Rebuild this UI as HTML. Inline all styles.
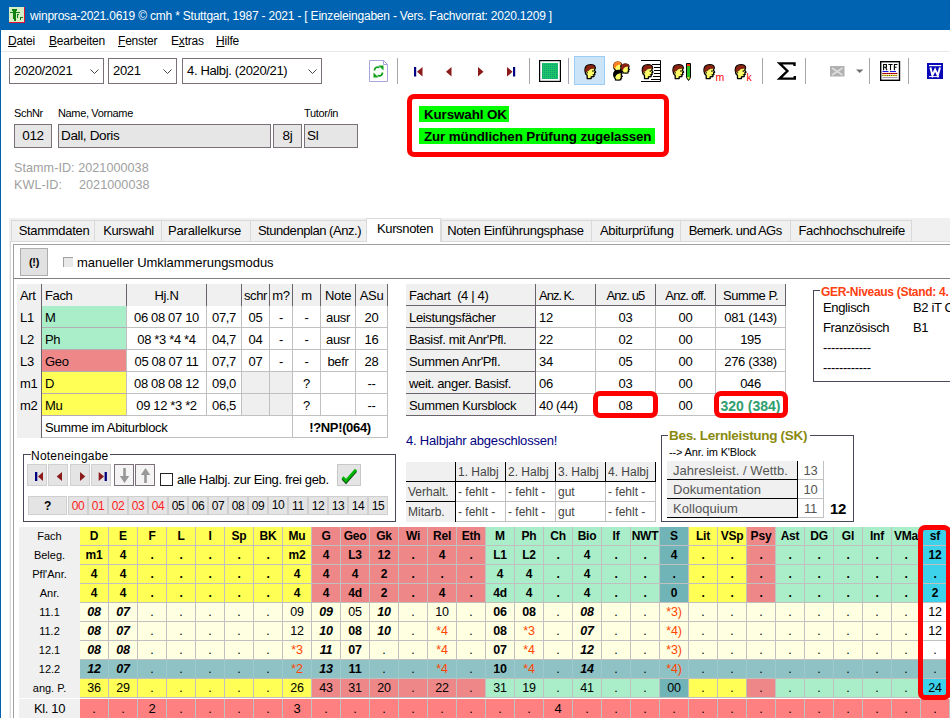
<!DOCTYPE html>
<html><head><meta charset="utf-8"><title>winprosa</title><style>
*{box-sizing:border-box;margin:0;padding:0}
html,body{width:950px;height:718px;overflow:hidden;background:#fff}
body{position:relative;font-family:"Liberation Sans",sans-serif;font-size:13px;letter-spacing:-0.35px;color:#000}
.a{position:absolute;white-space:nowrap}
.t{position:absolute;white-space:nowrap;overflow:hidden}
.c{text-align:center}
.b{font-weight:bold}
.bi{font-weight:bold;font-style:italic}
.o{color:#FF4500}
.fld{position:absolute;background:#E6E6E6;border:1px solid #7A707A;height:24px;line-height:22px;font-size:13.5px;white-space:nowrap}
.cmb{position:absolute;background:#fff;border:1px solid #7A707A;height:26px;line-height:24px;font-size:13px;padding-left:4px;white-space:nowrap}
.cmb svg{position:absolute;right:4px;top:10px}
.sep{position:absolute;width:1px;top:58px;height:27px;background:#A8A8A8}
.tab{position:absolute;top:220px;height:21px;line-height:20px;background:#F0F0F0;border:1px solid #D9D9D9;border-bottom:none;text-align:center;font-size:13px;white-space:nowrap}
.btn{position:absolute;background:#E1E1E1;border:1px solid #ADADAD}
.nb{position:absolute;top:496px;width:20px;height:19px;background:#E4E4E4;border:1px solid #CFCFCF;line-height:19px;text-align:center;font-size:12px}
.rbox{position:absolute;border:5px solid #FF0000;border-radius:7px}
</style></head><body>
<div class="a" style="left:0;top:0;width:950px;height:30px;background:#0063B1"></div>
<div class="a" style="left:0;top:30px;width:1px;height:688px;background:#0063B1"></div>
<svg class="a" style="left:9px;top:7px" width="16" height="16" viewBox="0 0 16 16" shape-rendering="crispEdges"><rect width="16" height="16" fill="#D6EEC6"/><path d="M15.5 0V15.5H0" stroke="#E81030" stroke-width="1" fill="none"/><rect x="3" y="2" width="5" height="2" fill="#108010"/><rect x="1" y="5" width="10" height="1" fill="#108010"/><rect x="5" y="2" width="2" height="12" fill="#108010"/><rect x="4" y="4" width="1" height="8" fill="#108010"/><rect x="8" y="7" width="2" height="1" fill="#108010"/><rect x="8" y="7" width="1" height="4" fill="#108010"/><rect x="11" y="10" width="3" height="1" fill="#108010"/><rect x="11" y="10" width="1" height="3" fill="#108010"/></svg>
<div class="a" style="left:30px;top:0;height:31px;line-height:33px;color:#fff;font-size:12px;letter-spacing:-0.205px">winprosa-2021.0619 © cmh * Stuttgart, 1987 - 2021 - [ Einzeleingaben - Vers. Fachvorrat: 2020.1209 ]</div>
<div class="a" style="left:8px;top:32px;height:19px;line-height:19px;font-size:12px;letter-spacing:-0.2px"><u>D</u>atei</div>
<div class="a" style="left:49px;top:32px;height:19px;line-height:19px;font-size:12px;letter-spacing:-0.2px"><u>B</u>earbeiten</div>
<div class="a" style="left:118px;top:32px;height:19px;line-height:19px;font-size:12px;letter-spacing:-0.2px"><u>F</u>enster</div>
<div class="a" style="left:171px;top:32px;height:19px;line-height:19px;font-size:12px;letter-spacing:-0.2px">E<u>x</u>tras</div>
<div class="a" style="left:216px;top:32px;height:19px;line-height:19px;font-size:12px;letter-spacing:-0.2px"><u>H</u>ilfe</div>
<div class="a" style="left:1px;top:51px;width:949px;height:1px;background:#E8E8E8"></div>
<div class="cmb" style="left:9px;top:58px;width:95px">2020/2021<svg width="9" height="6" viewBox="0 0 9 6"><path d="M0.5 0.5L4.5 4.5L8.5 0.5" stroke="#444" fill="none" stroke-width="1"/></svg></div>
<div class="cmb" style="left:108px;top:58px;width:69px">2021<svg width="9" height="6" viewBox="0 0 9 6"><path d="M0.5 0.5L4.5 4.5L8.5 0.5" stroke="#444" fill="none" stroke-width="1"/></svg></div>
<div class="cmb" style="left:182px;top:58px;width:140px">4. Halbj. (2020/21)<svg width="9" height="6" viewBox="0 0 9 6"><path d="M0.5 0.5L4.5 4.5L8.5 0.5" stroke="#444" fill="none" stroke-width="1"/></svg></div>
<svg class="a" style="left:0;top:52px" width="950" height="40" viewBox="0 52 950 40">
<defs>
<g id="face"><g transform="translate(0.5,0.6) scale(0.94)">
<path d="M1 6.5C1 2.5 3.5 0.6 7 0.6C10 0.6 12 2 12 4.2L11 6.5L12.4 8.6L11.2 9.3L11.6 11L10.6 11.4L10.5 13.2L7.6 13.6L7.6 15.4L3.4 15.4L3.4 12.2C1.6 10.6 1 8.6 1 6.5Z" fill="#FFFF6A" stroke="#000" stroke-width="1.4" stroke-linejoin="round"/>
<path d="M1.3 8.2C1 3 3.6 1 7 1C10 1 11.8 2.2 11.8 4.4L9.6 4.6C7 4.8 5.4 5.6 4.6 7.4L3.4 7.2L3 8.8Z" fill="#8E2212" stroke="#3A0A04" stroke-width="0.5"/>
<rect x="8.9" y="6.6" width="1.2" height="1.7" fill="#000"/>
<path d="M9 11.3H11.2" stroke="#000" stroke-width="0.9"/>
<path d="M3.6 8.4V10" stroke="#000" stroke-width="0.8"/>
</g></g>
<pattern id="gtex" width="2" height="2" patternUnits="userSpaceOnUse"><rect width="2" height="2" fill="#1CC468"/><rect width="1" height="1" fill="#0E9C78"/></pattern>
</defs>
<!-- refresh -->
<path d="M369.5 60.5H383.5L387.5 64.5V81.5H369.5Z" fill="#fff" stroke="#A8A4DC" stroke-width="1"/>
<path d="M383.5 60.5V64.5H387.5" fill="none" stroke="#A8A4DC" stroke-width="1"/>
<path d="M374.5 70.5C374.5 67.5 377 66.5 379.5 67.5" fill="none" stroke="#10A018" stroke-width="1.8"/>
<path d="M378.5 65.5L383.5 65.5L383.5 70.5Z" fill="#10A018"/>
<path d="M382.5 72.5C382.5 75.5 380 76.5 377.5 75.5" fill="none" stroke="#10A018" stroke-width="1.8"/>
<path d="M373.5 72.5L378.5 77.5L373.5 77.5Z" fill="#10A018"/>
<!-- separators -->
<g stroke="#ACA4AC" stroke-width="1">
<path d="M397.5 58V84M529.5 58V84M568.5 58V84M762.5 58V84M805.5 58V84M869.5 58V84M908.5 58V84"/>
</g>
<!-- nav -->
<rect x="414" y="67" width="2.2" height="9.5" fill="#000080"/>
<path d="M422.5 67V76.5L417 71.75Z" fill="#8B1A1A"/>
<path d="M451.5 67V76.5L446 71.75Z" fill="#8B1A1A"/>
<path d="M478 67V76.5L483.5 71.75Z" fill="#8B1A1A"/>
<path d="M507 67V76.5L512.5 71.75Z" fill="#8B1A1A"/>
<rect x="513" y="67" width="2.2" height="9.5" fill="#000080"/>
<!-- green square -->
<rect x="539.6" y="60.6" width="20.8" height="20.8" fill="#fff" stroke="#000" stroke-width="1.2"/>
<rect x="542" y="63" width="16" height="16" fill="url(#gtex)"/>
<!-- selected -->
<rect x="574.5" y="56.5" width="30" height="28" fill="#CCE4F7" stroke="#9CCDF5" stroke-width="1"/>
<use href="#face" x="583.5" y="63.5"/>
<!-- group -->
<g transform="translate(613,61.6) scale(0.7)"><path d="M1 6.5C1 2.5 3.5 0.6 7 0.6C10 0.6 12 2 12 4.2L11 6.5L12.4 8.6L11.2 9.3L11.6 11L10.6 11.4L10.5 13.2L7.6 13.6L3.4 13.4L3.4 12.2C1.6 10.6 1 8.6 1 6.5Z" fill="#FFFF66" stroke="#000" stroke-width="1.8"/><path d="M0.6 7.2C0.6 2 3.6 0 7 0C10.5 0 12.4 2 12.2 4.4L8.4 4.6C5.6 5 4 6.8 3.2 9.8L1.5 9.6Z" fill="#FF8020"/></g>
<g transform="translate(620.6,63.6) scale(0.7)"><path d="M1 6.5C1 2.5 3.5 0.6 7 0.6C10 0.6 12 2 12 4.2L11 6.5L12.4 8.6L11.2 9.3L11.6 11L10.6 11.4L10.5 13.2L7.6 13.6L3.4 13.4L3.4 12.2C1.6 10.6 1 8.6 1 6.5Z" fill="#FFFF66" stroke="#000" stroke-width="1.8"/><path d="M0.6 7.2C0.6 2 3.6 0 7 0C10.5 0 12.4 2 12.2 4.4L8.4 4.6C5.6 5 4 6.8 3.2 9.8L1.5 9.6Z" fill="#8E2212"/></g>
<g transform="translate(613,70) scale(0.74)"><path d="M1 6.5C1 2.5 3.5 0.6 7 0.6C10 0.6 12 2 12 4.2L11 6.5L12.4 8.6L11.2 9.3L11.6 11L10.6 11.4L10.5 13.2L7.6 13.6L3.4 13.4L3.4 12.2C1.6 10.6 1 8.6 1 6.5Z" fill="#FFFF66" stroke="#000" stroke-width="1.8"/><path d="M0.6 7.2C0.6 2 3.6 0 7 0C10.5 0 12.4 2 12.2 4.4L8.4 4.6C5.6 5 4 6.8 3.2 9.8L1.5 9.6Z" fill="#000"/></g>
<!-- face + doc -->
<path d="M641 60.5H660.5V81.5H641" fill="none" stroke="#000" stroke-width="1"/>
<path d="M652 64.5H660M654 67.5H660M654 70.5H660M654 73.5H660M653 76.5H660M651 79.5H660" stroke="#000" stroke-width="1"/>
<use href="#face" x="640.8" y="63.5"/>
<!-- face + pencil -->
<use href="#face" x="671.5" y="63.5"/>
<path d="M686.5 63.5H690.5V77.5L688.5 80.5L686.5 77.5Z" fill="#20C020" stroke="#000" stroke-width="1"/>
<rect x="687" y="64" width="3" height="2" fill="#FF3010"/>
<path d="M687 77.2H690L688.5 79.6Z" fill="#FFE040"/>
<!-- face m -->
<use href="#face" x="702.5" y="63.5"/>
<text x="715.5" y="80.5" font-family="Liberation Sans" font-size="10.5" fill="#FF0000">m</text>
<!-- face k -->
<use href="#face" x="733.8" y="63.5"/>
<text x="746.5" y="80.5" font-family="Liberation Sans" font-size="10.5" fill="#FF0000">k</text>
<!-- sigma -->
<path d="M794.5 66V63.4H779.6L787.4 71L779.6 78.6H794.8V76" fill="none" stroke="#000" stroke-width="2.4" stroke-linejoin="miter"/>
<!-- envelope -->
<rect x="830" y="66" width="14.5" height="10.5" fill="#B0B0B0"/>
<path d="M832 68L842.5 75M842.5 68L832 75" stroke="#DCDCDC" stroke-width="1.6"/>
<path d="M856 69.5H863.4L859.7 73Z" fill="#707070"/>
<!-- RTF -->
<rect x="880.7" y="61.7" width="18.8" height="18.6" fill="#fff" stroke="#000" stroke-width="1.4"/>
<path d="M883.6 70.2V64.5H886.4V67.3H883.6M885.6 67.3L887 70.2M888.4 64.5H892.6M890.5 64.5V70.2M894.4 70.2V64.5H897.4M894.4 67.3H896.6" fill="none" stroke="#000" stroke-width="1.1"/>
<path d="M882.5 71.5H897.5" stroke="#1818E0" stroke-width="1" stroke-dasharray="6 1.5"/>
<path d="M882.5 73.5H897.5" stroke="#E81010" stroke-width="1.2"/>
<path d="M882.5 73.5H897.5" stroke="#400000" stroke-width="1.2" stroke-dasharray="0.8 1.4"/>
<path d="M882.5 75.5H897.5" stroke="#F0E010" stroke-width="1.2"/>
<path d="M882.5 75.5H897.5" stroke="#303000" stroke-width="1.2" stroke-dasharray="0.8 1.4"/>
<path d="M882.5 77.6H897.5" stroke="#9080A0" stroke-width="0.9"/>
<!-- word -->
<rect x="927" y="63" width="16" height="16" fill="#0808B8"/>
<path d="M929 65.6H941.2" stroke="#fff" stroke-width="1.2"/>
<path d="M930.4 67.6L932.4 75.4L935.1 69.6L937.8 75.4L940 67.6" fill="none" stroke="#fff" stroke-width="2"/>
<path d="M929 76.6H939" stroke="#fff" stroke-width="1"/>
</svg>

<div class="a" style="left:14px;top:106px;font-size:11px;line-height:14px">SchNr</div>
<div class="a" style="left:58px;top:106px;font-size:11px;line-height:14px">Name, Vorname</div>
<div class="a" style="left:304px;top:106px;font-size:11px;line-height:14px">Tutor/in</div>
<div class="fld c" style="left:14px;top:124px;width:38px">012</div>
<div class="fld" style="left:58px;top:124px;width:213px;padding-left:2px">Dall, Doris</div>
<div class="fld c" style="left:273px;top:124px;width:29px">8j</div>
<div class="fld" style="left:304px;top:124px;width:54px;padding-left:2px">Sl</div>
<div class="a" style="left:14px;top:161px;line-height:15px;color:#A0A0A0;font-size:12.6px;letter-spacing:0.05px">Stamm-ID: 2021000038</div>
<div class="a" style="left:14px;top:178px;line-height:15px;color:#A0A0A0;font-size:12.6px;letter-spacing:0.05px">KWL-ID:</div>
<div class="a" style="left:79px;top:178px;line-height:15px;color:#A0A0A0;font-size:12.6px;letter-spacing:0.05px">2021000038</div>
<div class="rbox" style="left:407px;top:94px;width:262px;height:63px;border-radius:7px"></div>
<div class="a b" style="left:419px;top:106px;width:90px;height:16px;line-height:17px;background:#00FF00;font-size:13.4px;letter-spacing:-0.12px;padding-left:5px">Kurswahl OK</div>
<div class="a b" style="left:419px;top:128px;width:236px;height:16px;line-height:17px;background:#00FF00;font-size:13.4px;letter-spacing:-0.12px;padding-left:5px">Zur mündlichen Prüfung zugelassen</div>
<div class="a" style="left:9px;top:218px;width:941px;height:500px;background:#F0F0F0"></div>
<div class="a" style="left:10px;top:241px;width:940px;height:477px;background:#fff;border-left:1px solid #DADADA;border-top:1px solid #DADADA"></div>
<div class="tab" style="left:11px;width:84px"><span style="position:relative;left:1px;letter-spacing:-0.3px">Stammdaten</span></div>
<div class="tab" style="left:94px;width:68px"><span style="position:relative;left:0.5px;letter-spacing:-0.35px">Kurswahl</span></div>
<div class="tab" style="left:161px;width:90px"><span style="position:relative;left:-1.5px;letter-spacing:-0.15px">Parallelkurse</span></div>
<div class="tab" style="left:250px;width:117px"><span style="position:relative;left:1px;letter-spacing:-0.45px">Stundenplan (Anz.)</span></div>
<div class="tab" style="left:441px;width:151px"><span style="position:relative;left:-1px;letter-spacing:-0.3px">Noten Einführungsphase</span></div>
<div class="tab" style="left:591px;width:90px"><span style="position:relative;left:0.8px;letter-spacing:-0.35px">Abiturprüfung</span></div>
<div class="tab" style="left:680px;width:111px"><span style="position:relative;left:-0.4px;letter-spacing:-0.6px">Bemerk. und AGs</span></div>
<div class="tab" style="left:790px;width:122px"><span style="position:relative;left:0.7px;letter-spacing:-0.35px">Fachhochschulreife</span></div>
<div class="tab" style="left:366px;width:75px;top:218px;height:24px;line-height:19px;background:#fff;border-color:#DADADA"><span style="position:relative;left:1.5px">Kursnoten</span></div>
<div class="a" style="left:13px;top:244px;width:937px;height:35px;border-left:1px solid #A0A0A0;border-top:1px solid #A0A0A0"></div>
<div class="a" style="left:13px;top:278px;width:937px;height:440px;border-left:1px solid #A0A0A0;border-top:1px solid #808080"></div>
<div class="btn b c" style="left:20px;top:248px;width:28px;height:28px;line-height:26px;font-size:11px">(!)</div>
<div class="a" style="left:63px;top:257px;width:10px;height:10px;background:#E8E8E8;border-left:1px solid #A0A0A0;border-top:1px solid #A0A0A0"></div>
<div class="a" style="left:77px;top:255px;line-height:16px;font-size:13px;letter-spacing:-0.05px">manueller Umklammerungsmodus</div>
<div class="t " style="left:17px;top:284px;width:25px;height:22px;line-height:24px;background:#F0F0F0;border-right:1px solid #6B636B;padding-left:3px;">Art</div>
<div class="t " style="left:42px;top:284px;width:85px;height:22px;line-height:24px;background:#F0F0F0;border-right:1px solid #6B636B;padding-left:3px;">Fach</div>
<div class="t c" style="left:127px;top:284px;width:80px;height:22px;line-height:24px;background:#F0F0F0;border-right:1px solid #6B636B;">Hj.N</div>
<div class="t c" style="left:207px;top:284px;width:35px;height:22px;line-height:24px;background:#F0F0F0;border-right:1px solid #6B636B;"></div>
<div class="t c" style="left:242px;top:284px;width:28px;height:22px;line-height:24px;background:#F0F0F0;border-right:1px solid #6B636B;">schr</div>
<div class="t c" style="left:270px;top:284px;width:23px;height:22px;line-height:24px;background:#F0F0F0;border-right:1px solid #6B636B;">m?</div>
<div class="t c" style="left:293px;top:284px;width:28px;height:22px;line-height:24px;background:#F0F0F0;border-right:1px solid #6B636B;">m</div>
<div class="t c" style="left:321px;top:284px;width:35px;height:22px;line-height:24px;background:#F0F0F0;border-right:1px solid #6B636B;">Note</div>
<div class="t c" style="left:356px;top:284px;width:32px;height:22px;line-height:24px;background:#F0F0F0;border-right:1px solid #6B636B;">ASu</div>
<div class="t " style="left:17px;top:306px;width:25px;height:22px;line-height:24px;background:#F0F0F0;border-right:1px solid #6B636B;padding-left:3px;">L1</div>
<div class="t " style="left:42px;top:306px;width:85px;height:22px;line-height:24px;background:#A9EEC9;border-right:1px solid #C0C0C0;border-bottom:1px solid #B4ACB4;padding-left:3px;">M</div>
<div class="t c" style="left:127px;top:306px;width:80px;height:22px;line-height:24px;border-right:1px solid #C0C0C0;border-bottom:1px solid #C0C0C0;">06 08 07 10</div>
<div class="t c" style="left:207px;top:306px;width:35px;height:22px;line-height:24px;border-right:1px solid #C0C0C0;border-bottom:1px solid #C0C0C0;">07,7</div>
<div class="t c" style="left:242px;top:306px;width:28px;height:22px;line-height:24px;border-right:1px solid #C0C0C0;border-bottom:1px solid #C0C0C0;">05</div>
<div class="t c" style="left:270px;top:306px;width:23px;height:22px;line-height:24px;border-right:1px solid #C0C0C0;border-bottom:1px solid #C0C0C0;">-</div>
<div class="t c" style="left:293px;top:306px;width:28px;height:22px;line-height:24px;border-right:1px solid #C0C0C0;border-bottom:1px solid #C0C0C0;">-</div>
<div class="t c" style="left:321px;top:306px;width:35px;height:22px;line-height:24px;border-right:1px solid #C0C0C0;border-bottom:1px solid #C0C0C0;">ausr</div>
<div class="t c" style="left:356px;top:306px;width:32px;height:22px;line-height:24px;border-right:1px solid #C0C0C0;border-bottom:1px solid #C0C0C0;">20</div>
<div class="t " style="left:17px;top:328px;width:25px;height:22px;line-height:24px;background:#F0F0F0;border-right:1px solid #6B636B;padding-left:3px;">L2</div>
<div class="t " style="left:42px;top:328px;width:85px;height:22px;line-height:24px;background:#A9EEC9;border-right:1px solid #C0C0C0;border-bottom:1px solid #B4ACB4;padding-left:3px;">Ph</div>
<div class="t c" style="left:127px;top:328px;width:80px;height:22px;line-height:24px;border-right:1px solid #C0C0C0;border-bottom:1px solid #C0C0C0;">08 *3 *4 *4</div>
<div class="t c" style="left:207px;top:328px;width:35px;height:22px;line-height:24px;border-right:1px solid #C0C0C0;border-bottom:1px solid #C0C0C0;">04,7</div>
<div class="t c" style="left:242px;top:328px;width:28px;height:22px;line-height:24px;border-right:1px solid #C0C0C0;border-bottom:1px solid #C0C0C0;">04</div>
<div class="t c" style="left:270px;top:328px;width:23px;height:22px;line-height:24px;border-right:1px solid #C0C0C0;border-bottom:1px solid #C0C0C0;">-</div>
<div class="t c" style="left:293px;top:328px;width:28px;height:22px;line-height:24px;border-right:1px solid #C0C0C0;border-bottom:1px solid #C0C0C0;">-</div>
<div class="t c" style="left:321px;top:328px;width:35px;height:22px;line-height:24px;border-right:1px solid #C0C0C0;border-bottom:1px solid #C0C0C0;">ausr</div>
<div class="t c" style="left:356px;top:328px;width:32px;height:22px;line-height:24px;border-right:1px solid #C0C0C0;border-bottom:1px solid #C0C0C0;">16</div>
<div class="t " style="left:17px;top:350px;width:25px;height:22px;line-height:24px;background:#F0F0F0;border-right:1px solid #6B636B;padding-left:3px;">L3</div>
<div class="t " style="left:42px;top:350px;width:85px;height:22px;line-height:24px;background:#EE8888;border-right:1px solid #C0C0C0;border-bottom:1px solid #B4ACB4;padding-left:3px;">Geo</div>
<div class="t c" style="left:127px;top:350px;width:80px;height:22px;line-height:24px;border-right:1px solid #C0C0C0;border-bottom:1px solid #C0C0C0;">05 08 07 11</div>
<div class="t c" style="left:207px;top:350px;width:35px;height:22px;line-height:24px;border-right:1px solid #C0C0C0;border-bottom:1px solid #C0C0C0;">07,7</div>
<div class="t c" style="left:242px;top:350px;width:28px;height:22px;line-height:24px;border-right:1px solid #C0C0C0;border-bottom:1px solid #C0C0C0;">07</div>
<div class="t c" style="left:270px;top:350px;width:23px;height:22px;line-height:24px;border-right:1px solid #C0C0C0;border-bottom:1px solid #C0C0C0;">-</div>
<div class="t c" style="left:293px;top:350px;width:28px;height:22px;line-height:24px;border-right:1px solid #C0C0C0;border-bottom:1px solid #C0C0C0;">-</div>
<div class="t c" style="left:321px;top:350px;width:35px;height:22px;line-height:24px;border-right:1px solid #C0C0C0;border-bottom:1px solid #C0C0C0;">befr</div>
<div class="t c" style="left:356px;top:350px;width:32px;height:22px;line-height:24px;border-right:1px solid #C0C0C0;border-bottom:1px solid #C0C0C0;">28</div>
<div class="t " style="left:17px;top:372px;width:25px;height:22px;line-height:24px;background:#F0F0F0;border-right:1px solid #6B636B;padding-left:3px;">m1</div>
<div class="t " style="left:42px;top:372px;width:85px;height:22px;line-height:24px;background:#FFFF55;border-right:1px solid #C0C0C0;border-bottom:1px solid #B4ACB4;padding-left:3px;">D</div>
<div class="t c" style="left:127px;top:372px;width:80px;height:22px;line-height:24px;border-right:1px solid #C0C0C0;border-bottom:1px solid #C0C0C0;">08 08 08 12</div>
<div class="t c" style="left:207px;top:372px;width:35px;height:22px;line-height:24px;border-right:1px solid #C0C0C0;border-bottom:1px solid #C0C0C0;">09,0</div>
<div class="t c" style="left:242px;top:372px;width:28px;height:22px;line-height:24px;background:#EFEFEF;border-right:1px solid #C0C0C0;border-bottom:1px solid #C0C0C0;"></div>
<div class="t c" style="left:270px;top:372px;width:23px;height:22px;line-height:24px;background:#EFEFEF;border-right:1px solid #C0C0C0;border-bottom:1px solid #C0C0C0;"></div>
<div class="t c" style="left:293px;top:372px;width:28px;height:22px;line-height:24px;border-right:1px solid #C0C0C0;border-bottom:1px solid #C0C0C0;">?</div>
<div class="t c" style="left:321px;top:372px;width:35px;height:22px;line-height:24px;border-right:1px solid #C0C0C0;border-bottom:1px solid #C0C0C0;"></div>
<div class="t c" style="left:356px;top:372px;width:32px;height:22px;line-height:24px;border-right:1px solid #C0C0C0;border-bottom:1px solid #C0C0C0;">--</div>
<div class="t " style="left:17px;top:394px;width:25px;height:22px;line-height:24px;background:#F0F0F0;border-right:1px solid #6B636B;padding-left:3px;">m2</div>
<div class="t " style="left:42px;top:394px;width:85px;height:22px;line-height:24px;background:#FFFF55;border-right:1px solid #C0C0C0;border-bottom:1px solid #B4ACB4;padding-left:3px;">Mu</div>
<div class="t c" style="left:127px;top:394px;width:80px;height:22px;line-height:24px;border-right:1px solid #C0C0C0;border-bottom:1px solid #C0C0C0;">09 12 *3 *2</div>
<div class="t c" style="left:207px;top:394px;width:35px;height:22px;line-height:24px;border-right:1px solid #C0C0C0;border-bottom:1px solid #C0C0C0;">06,5</div>
<div class="t c" style="left:242px;top:394px;width:28px;height:22px;line-height:24px;background:#EFEFEF;border-right:1px solid #C0C0C0;border-bottom:1px solid #C0C0C0;"></div>
<div class="t c" style="left:270px;top:394px;width:23px;height:22px;line-height:24px;background:#EFEFEF;border-right:1px solid #C0C0C0;border-bottom:1px solid #C0C0C0;"></div>
<div class="t c" style="left:293px;top:394px;width:28px;height:22px;line-height:24px;border-right:1px solid #C0C0C0;border-bottom:1px solid #C0C0C0;">?</div>
<div class="t c" style="left:321px;top:394px;width:35px;height:22px;line-height:24px;border-right:1px solid #C0C0C0;border-bottom:1px solid #C0C0C0;"></div>
<div class="t c" style="left:356px;top:394px;width:32px;height:22px;line-height:24px;border-right:1px solid #C0C0C0;border-bottom:1px solid #C0C0C0;">--</div>
<div class="t " style="left:17px;top:416px;width:25px;height:22px;line-height:22px;background:#F0F0F0;border-right:1px solid #6B636B;"></div>
<div class="t " style="left:42px;top:416px;width:251px;height:22px;line-height:24px;border-right:1px solid #C0C0C0;border-bottom:1px solid #C0C0C0;padding-left:3px;">Summe im Abiturblock</div>
<div class="t c b" style="left:293px;top:416px;width:95px;height:22px;line-height:24px;border-right:1px solid #C0C0C0;border-bottom:1px solid #C0C0C0;">!?NP!(064)</div>
<div class="t " style="left:406px;top:284px;width:130px;height:22px;line-height:24px;background:#F0F0F0;border-right:1px solid #6B636B;border-bottom:1px solid #6B636B;padding-left:3px;">Fachart&nbsp; (4 | 4)</div>
<div class="t " style="left:536px;top:284px;width:60px;height:22px;line-height:24px;background:#F0F0F0;border-right:1px solid #6B636B;border-bottom:1px solid #6B636B;padding-left:3px;"><span style="letter-spacing:-1px">Anz. K.</span></div>
<div class="t c" style="left:596px;top:284px;width:60px;height:22px;line-height:24px;background:#F0F0F0;border-right:1px solid #6B636B;border-bottom:1px solid #6B636B;"><span style="letter-spacing:-0.9px">Anz. u5</span></div>
<div class="t c" style="left:656px;top:284px;width:60px;height:22px;line-height:24px;background:#F0F0F0;border-right:1px solid #6B636B;border-bottom:1px solid #6B636B;"><span style="letter-spacing:-0.8px">Anz. off.</span></div>
<div class="t c" style="left:716px;top:284px;width:70px;height:22px;line-height:24px;background:#F0F0F0;border-right:1px solid #6B636B;border-bottom:1px solid #6B636B;"><span style="letter-spacing:-0.5px">Summe P.</span></div>
<div class="t " style="left:406px;top:306px;width:130px;height:22px;line-height:24px;background:#F0F0F0;border-right:1px solid #6B636B;border-bottom:1px solid #6B636B;padding-left:3px;">Leistungsfächer</div>
<div class="t " style="left:536px;top:306px;width:60px;height:22px;line-height:24px;border-right:1px solid #C0C0C0;border-bottom:1px solid #C0C0C0;padding-left:3px;">12</div>
<div class="t c" style="left:596px;top:306px;width:60px;height:22px;line-height:24px;border-right:1px solid #C0C0C0;border-bottom:1px solid #C0C0C0;">03</div>
<div class="t c" style="left:656px;top:306px;width:60px;height:22px;line-height:24px;border-right:1px solid #C0C0C0;border-bottom:1px solid #C0C0C0;">00</div>
<div class="t c" style="left:716px;top:306px;width:70px;height:22px;line-height:24px;border-right:1px solid #C0C0C0;border-bottom:1px solid #C0C0C0;">081 (143)</div>
<div class="t " style="left:406px;top:328px;width:130px;height:22px;line-height:24px;background:#F0F0F0;border-right:1px solid #6B636B;border-bottom:1px solid #6B636B;padding-left:3px;">Basisf. mit Anr'Pfl.</div>
<div class="t " style="left:536px;top:328px;width:60px;height:22px;line-height:24px;border-right:1px solid #C0C0C0;border-bottom:1px solid #C0C0C0;padding-left:3px;">22</div>
<div class="t c" style="left:596px;top:328px;width:60px;height:22px;line-height:24px;border-right:1px solid #C0C0C0;border-bottom:1px solid #C0C0C0;">02</div>
<div class="t c" style="left:656px;top:328px;width:60px;height:22px;line-height:24px;border-right:1px solid #C0C0C0;border-bottom:1px solid #C0C0C0;">00</div>
<div class="t c" style="left:716px;top:328px;width:70px;height:22px;line-height:24px;border-right:1px solid #C0C0C0;border-bottom:1px solid #C0C0C0;">195</div>
<div class="t " style="left:406px;top:350px;width:130px;height:22px;line-height:24px;background:#F0F0F0;border-right:1px solid #6B636B;border-bottom:1px solid #6B636B;padding-left:3px;">Summen Anr'Pfl.</div>
<div class="t " style="left:536px;top:350px;width:60px;height:22px;line-height:24px;border-right:1px solid #C0C0C0;border-bottom:1px solid #C0C0C0;padding-left:3px;">34</div>
<div class="t c" style="left:596px;top:350px;width:60px;height:22px;line-height:24px;border-right:1px solid #C0C0C0;border-bottom:1px solid #C0C0C0;">05</div>
<div class="t c" style="left:656px;top:350px;width:60px;height:22px;line-height:24px;border-right:1px solid #C0C0C0;border-bottom:1px solid #C0C0C0;">00</div>
<div class="t c" style="left:716px;top:350px;width:70px;height:22px;line-height:24px;border-right:1px solid #C0C0C0;border-bottom:1px solid #C0C0C0;">276 (338)</div>
<div class="t " style="left:406px;top:372px;width:130px;height:22px;line-height:24px;background:#F0F0F0;border-right:1px solid #6B636B;border-bottom:1px solid #6B636B;padding-left:3px;">weit. anger. Basisf.</div>
<div class="t " style="left:536px;top:372px;width:60px;height:22px;line-height:24px;border-right:1px solid #C0C0C0;border-bottom:1px solid #C0C0C0;padding-left:3px;">06</div>
<div class="t c" style="left:596px;top:372px;width:60px;height:22px;line-height:24px;border-right:1px solid #C0C0C0;border-bottom:1px solid #C0C0C0;">03</div>
<div class="t c" style="left:656px;top:372px;width:60px;height:22px;line-height:24px;border-right:1px solid #C0C0C0;border-bottom:1px solid #C0C0C0;">00</div>
<div class="t c" style="left:716px;top:372px;width:70px;height:22px;line-height:24px;border-right:1px solid #C0C0C0;border-bottom:1px solid #C0C0C0;">046</div>
<div class="t " style="left:406px;top:394px;width:130px;height:22px;line-height:24px;background:#F0F0F0;border-right:1px solid #6B636B;border-bottom:1px solid #6B636B;padding-left:3px;">Summen Kursblock</div>
<div class="t " style="left:536px;top:394px;width:60px;height:22px;line-height:24px;border-right:1px solid #C0C0C0;border-bottom:1px solid #C0C0C0;padding-left:3px;">40 (44)</div>
<div class="t c" style="left:596px;top:394px;width:60px;height:22px;line-height:24px;border-right:1px solid #C0C0C0;border-bottom:1px solid #C0C0C0;">08</div>
<div class="t c" style="left:656px;top:394px;width:60px;height:22px;line-height:24px;border-right:1px solid #C0C0C0;border-bottom:1px solid #C0C0C0;">00</div>
<div class="t c" style="left:716px;top:394px;width:70px;height:22px;line-height:24px;border-right:1px solid #C0C0C0;border-bottom:1px solid #C0C0C0;"><span style="color:#2E9E6E;font-weight:bold;font-size:14px;letter-spacing:0">320 (384)</span></div>
<div class="rbox" style="left:593px;top:391px;width:65px;height:27px"></div>
<div class="rbox" style="left:714px;top:391px;width:74px;height:27px"></div>
<div class="a" style="left:813px;top:290px;width:140px;height:92px;border:1px solid #484858"></div>
<div class="a b" style="left:820px;top:285px;height:15px;line-height:15px;background:#fff;color:#FF4010;font-size:12px;letter-spacing:-0.3px;padding:0 1px">GER-Niveaus (Stand: 4. Halbj.)</div>
<div class="a" style="left:823px;top:300px;line-height:15px">Englisch</div>
<div class="a" style="left:913px;top:300px;line-height:15px">B2 iT C1</div>
<div class="a" style="left:823px;top:320px;line-height:15px">Französisch</div>
<div class="a" style="left:913px;top:320px;line-height:15px">B1</div>
<div class="a" style="left:823px;top:340px;line-height:15px">------------</div>
<div class="a" style="left:823px;top:360px;line-height:15px">------------</div>
<div class="a" style="left:406px;top:433px;line-height:15px;color:#000080;font-size:13px;letter-spacing:-0.22px">4. Halbjahr abgeschlossen!</div>
<div class="t " style="left:406px;top:462px;width:50px;height:20px;line-height:20px;background:#F0F0F0;border-right:1px solid #000;border-bottom:1px solid #000;"></div>
<div class="t " style="left:456px;top:462px;width:50px;height:20px;line-height:20px;background:#F0F0F0;border-right:1px solid #000;border-bottom:1px solid #000;padding-left:2px;color:#444;font-size:12px;letter-spacing:0;">1. Halbj</div>
<div class="t " style="left:506px;top:462px;width:50px;height:20px;line-height:20px;background:#F0F0F0;border-right:1px solid #000;border-bottom:1px solid #000;padding-left:2px;color:#444;font-size:12px;letter-spacing:0;">2. Halbj</div>
<div class="t " style="left:556px;top:462px;width:50px;height:20px;line-height:20px;background:#F0F0F0;border-right:1px solid #000;border-bottom:1px solid #000;padding-left:2px;color:#444;font-size:12px;letter-spacing:0;">3. Halbj</div>
<div class="t " style="left:606px;top:462px;width:50px;height:20px;line-height:20px;background:#F0F0F0;border-right:1px solid #000;border-bottom:1px solid #000;padding-left:2px;color:#444;font-size:12px;letter-spacing:0;">4. Halbj</div>
<div class="t " style="left:406px;top:482px;width:50px;height:20px;line-height:20px;background:#F0F0F0;border-right:1px solid #000;border-bottom:1px solid #000;padding-left:2px;color:#444;font-size:12px;letter-spacing:0;">Verhalt.</div>
<div class="t " style="left:456px;top:482px;width:50px;height:20px;line-height:20px;border-right:1px solid #C0C0C0;border-bottom:1px solid #C0C0C0;padding-left:2px;color:#444;font-size:12px;letter-spacing:0;">- fehlt -</div>
<div class="t " style="left:506px;top:482px;width:50px;height:20px;line-height:20px;border-right:1px solid #C0C0C0;border-bottom:1px solid #C0C0C0;padding-left:2px;color:#444;font-size:12px;letter-spacing:0;">- fehlt -</div>
<div class="t " style="left:556px;top:482px;width:50px;height:20px;line-height:20px;border-right:1px solid #C0C0C0;border-bottom:1px solid #C0C0C0;padding-left:2px;color:#444;font-size:12px;letter-spacing:0;">gut</div>
<div class="t " style="left:606px;top:482px;width:50px;height:20px;line-height:20px;border-right:1px solid #C0C0C0;border-bottom:1px solid #C0C0C0;padding-left:2px;color:#444;font-size:12px;letter-spacing:0;">- fehlt -</div>
<div class="t " style="left:406px;top:502px;width:50px;height:20px;line-height:20px;background:#F0F0F0;border-right:1px solid #000;padding-left:2px;color:#444;font-size:12px;letter-spacing:0;">Mitarb.</div>
<div class="t " style="left:456px;top:502px;width:50px;height:20px;line-height:20px;border-right:1px solid #C0C0C0;border-bottom:1px solid #C0C0C0;padding-left:2px;color:#444;font-size:12px;letter-spacing:0;">- fehlt -</div>
<div class="t " style="left:506px;top:502px;width:50px;height:20px;line-height:20px;border-right:1px solid #C0C0C0;border-bottom:1px solid #C0C0C0;padding-left:2px;color:#444;font-size:12px;letter-spacing:0;">- fehlt -</div>
<div class="t " style="left:556px;top:502px;width:50px;height:20px;line-height:20px;border-right:1px solid #C0C0C0;border-bottom:1px solid #C0C0C0;padding-left:2px;color:#444;font-size:12px;letter-spacing:0;">gut</div>
<div class="t " style="left:606px;top:502px;width:50px;height:20px;line-height:20px;border-right:1px solid #C0C0C0;border-bottom:1px solid #C0C0C0;padding-left:2px;color:#444;font-size:12px;letter-spacing:0;">- fehlt -</div>
<div class="a" style="left:661px;top:435px;width:193px;height:87px;border:1px solid #484858"></div>
<div class="a b" style="left:668px;top:428px;height:16px;line-height:16px;background:#fff;color:#8A8A10;font-size:13.5px;letter-spacing:-0.3px;padding:0 3px 0 1px">Bes. Lernleistung (SK)</div>
<div class="a" style="left:669px;top:446px;line-height:13px;font-size:11px;letter-spacing:-0.15px">--&gt; Anr. im K'Block</div>
<div class="t " style="left:667px;top:461px;width:131px;height:19px;line-height:19px;background:#F0F0F0;border-right:1px solid #000;border-bottom:1px solid #000;padding-left:6px;color:#555;letter-spacing:0.05px;">Jahresleist. / Wettb.</div>
<div class="t c" style="left:798px;top:461px;width:26px;height:19px;line-height:19px;border-right:1px solid #C0C0C0;border-bottom:1px solid #C0C0C0;color:#555;">13</div>
<div class="t " style="left:667px;top:480px;width:131px;height:19px;line-height:19px;background:#F0F0F0;border-right:1px solid #000;border-bottom:1px solid #000;padding-left:6px;color:#555;letter-spacing:0.05px;">Dokumentation</div>
<div class="t c" style="left:798px;top:480px;width:26px;height:19px;line-height:19px;border-right:1px solid #C0C0C0;border-bottom:1px solid #C0C0C0;color:#555;">10</div>
<div class="t " style="left:667px;top:499px;width:131px;height:19px;line-height:19px;background:#F0F0F0;border-right:1px solid #000;border-bottom:1px solid #000;padding-left:6px;color:#555;letter-spacing:0.05px;">Kolloquium</div>
<div class="t c" style="left:798px;top:499px;width:26px;height:19px;line-height:19px;border-right:1px solid #C0C0C0;border-bottom:1px solid #C0C0C0;color:#555;">11</div>
<div class="a b" style="left:830px;top:500px;line-height:17px;font-size:15px">12</div>
<div class="a" style="left:23px;top:454px;width:373px;height:68px;border:1px solid #484858"></div>
<div class="a" style="left:31px;top:448px;height:16px;line-height:16px;background:#fff;font-size:12px;letter-spacing:0.23px;padding:0 1px 0 0">Noteneingabe</div>
<div class="btn" style="left:27px;top:464px;width:20px;height:22px;background:#E4E4E4;border-color:#D0D0D0"></div>
<div class="btn" style="left:48px;top:464px;width:20px;height:22px;background:#E4E4E4;border-color:#D0D0D0"></div>
<div class="btn" style="left:70px;top:464px;width:20px;height:22px;background:#E4E4E4;border-color:#D0D0D0"></div>
<div class="btn" style="left:91px;top:464px;width:20px;height:22px;background:#E4E4E4;border-color:#D0D0D0"></div>
<div class="btn" style="left:114px;top:464px;width:20px;height:22px;background:#F4F4F4;border-color:#7A707A"></div>
<div class="btn" style="left:135px;top:464px;width:20px;height:22px;background:#F4F4F4;border-color:#7A707A"></div>
<svg class="a" style="left:24px;top:462px" width="140" height="28" viewBox="24 462 140 28">
<rect x="35" y="472" width="2.3" height="9" fill="#000080"/>
<path d="M43 472V481L38 476.5Z" fill="#8B1A1A"/>
<path d="M62 472V481L56.7 476.5Z" fill="#8B1A1A"/>
<path d="M80 472V481L85.3 476.5Z" fill="#8B1A1A"/>
<path d="M98.7 472V481L104 476.5Z" fill="#8B1A1A"/>
<rect x="104.6" y="472" width="2.3" height="9" fill="#000080"/>
<path d="M123.2 468H125.8V476H129.2L124.5 483L119.8 476H123.2Z" fill="#989898"/>
<path d="M144.2 483H146.8V475H150.2L145.5 468L140.8 475H144.2Z" fill="#989898"/>
</svg>

<div class="a" style="left:160px;top:473px;width:13px;height:13px;border:1px solid #222;background:#fff"></div>
<div class="a" style="left:177px;top:472px;line-height:16px;font-size:13px">alle Halbj. zur Eing. frei geb.</div>
<div class="btn" style="left:337px;top:464px;width:24px;height:22px;background:#E4E4E4;border-color:#C8C8C8"></div>
<svg class="a" style="left:337px;top:464px" width="24" height="22" viewBox="337 464 24 22"><path d="M342.6 478.6L346 482.4L356 471" stroke="#083808" stroke-width="2.6" fill="none"/><path d="M342.6 477.2L346 481L356 469.6" stroke="#00B400" stroke-width="2.8" fill="none"/></svg>
<div class="nb b" style="left:28px;width:39px">?</div>
<div class="nb" style="left:68px;color:#FF2020">00</div>
<div class="nb" style="left:88px;color:#FF2020">01</div>
<div class="nb" style="left:108px;color:#FF2020">02</div>
<div class="nb" style="left:128px;color:#FF2020">03</div>
<div class="nb" style="left:148px;color:#FF2020">04</div>
<div class="nb" style="left:168px;color:#000">05</div>
<div class="nb" style="left:188px;color:#000">06</div>
<div class="nb" style="left:208px;color:#000">07</div>
<div class="nb" style="left:228px;color:#000">08</div>
<div class="nb" style="left:248px;color:#000">09</div>
<div class="nb" style="left:268px;color:#000;line-height:17px">10</div>
<div class="nb" style="left:288px;color:#000">11</div>
<div class="nb" style="left:308px;color:#000">12</div>
<div class="nb" style="left:328px;color:#000">13</div>
<div class="nb" style="left:348px;color:#000">14</div>
<div class="nb" style="left:368px;color:#000">15</div>
<div class="t c" style="left:19px;top:527px;width:61px;height:19px;line-height:19px;background:#F0F0F0;font-size:11px;letter-spacing:0;">Fach</div>
<div class="t c b" style="left:80px;top:527px;width:29px;height:19px;line-height:19px;background:#FFFF55;border-right:1px solid #C0C0C0;border-bottom:1px solid #C0C0C0;font-size:12px;letter-spacing:-0.2px;">D</div>
<div class="t c b" style="left:109px;top:527px;width:29px;height:19px;line-height:19px;background:#FFFF55;border-right:1px solid #C0C0C0;border-bottom:1px solid #C0C0C0;font-size:12px;letter-spacing:-0.2px;">E</div>
<div class="t c b" style="left:138px;top:527px;width:29px;height:19px;line-height:19px;background:#FFFF55;border-right:1px solid #C0C0C0;border-bottom:1px solid #C0C0C0;font-size:12px;letter-spacing:-0.2px;">F</div>
<div class="t c b" style="left:167px;top:527px;width:29px;height:19px;line-height:19px;background:#FFFF55;border-right:1px solid #C0C0C0;border-bottom:1px solid #C0C0C0;font-size:12px;letter-spacing:-0.2px;">L</div>
<div class="t c b" style="left:196px;top:527px;width:29px;height:19px;line-height:19px;background:#FFFF55;border-right:1px solid #C0C0C0;border-bottom:1px solid #C0C0C0;font-size:12px;letter-spacing:-0.2px;">I</div>
<div class="t c b" style="left:225px;top:527px;width:29px;height:19px;line-height:19px;background:#FFFF55;border-right:1px solid #C0C0C0;border-bottom:1px solid #C0C0C0;font-size:12px;letter-spacing:-0.2px;">Sp</div>
<div class="t c b" style="left:254px;top:527px;width:29px;height:19px;line-height:19px;background:#FFFF55;border-right:1px solid #C0C0C0;border-bottom:1px solid #C0C0C0;font-size:12px;letter-spacing:-0.2px;">BK</div>
<div class="t c b" style="left:283px;top:527px;width:29px;height:19px;line-height:19px;background:#FFFF55;border-right:1px solid #C0C0C0;border-bottom:1px solid #C0C0C0;font-size:12px;letter-spacing:-0.2px;">Mu</div>
<div class="t c b" style="left:312px;top:527px;width:29px;height:19px;line-height:19px;background:#EE8888;border-right:1px solid #C0C0C0;border-bottom:1px solid #C0C0C0;font-size:12px;letter-spacing:-0.2px;">G</div>
<div class="t c b" style="left:341px;top:527px;width:29px;height:19px;line-height:19px;background:#EE8888;border-right:1px solid #C0C0C0;border-bottom:1px solid #C0C0C0;font-size:12px;letter-spacing:-0.2px;">Geo</div>
<div class="t c b" style="left:370px;top:527px;width:29px;height:19px;line-height:19px;background:#EE8888;border-right:1px solid #C0C0C0;border-bottom:1px solid #C0C0C0;font-size:12px;letter-spacing:-0.2px;">Gk</div>
<div class="t c b" style="left:399px;top:527px;width:29px;height:19px;line-height:19px;background:#EE8888;border-right:1px solid #C0C0C0;border-bottom:1px solid #C0C0C0;font-size:12px;letter-spacing:-0.2px;">Wi</div>
<div class="t c b" style="left:428px;top:527px;width:29px;height:19px;line-height:19px;background:#EE8888;border-right:1px solid #C0C0C0;border-bottom:1px solid #C0C0C0;font-size:12px;letter-spacing:-0.2px;">Rel</div>
<div class="t c b" style="left:457px;top:527px;width:29px;height:19px;line-height:19px;background:#EE8888;border-right:1px solid #C0C0C0;border-bottom:1px solid #C0C0C0;font-size:12px;letter-spacing:-0.2px;">Eth</div>
<div class="t c b" style="left:486px;top:527px;width:29px;height:19px;line-height:19px;background:#A9EEC9;border-right:1px solid #C0C0C0;border-bottom:1px solid #C0C0C0;font-size:12px;letter-spacing:-0.2px;">M</div>
<div class="t c b" style="left:515px;top:527px;width:29px;height:19px;line-height:19px;background:#A9EEC9;border-right:1px solid #C0C0C0;border-bottom:1px solid #C0C0C0;font-size:12px;letter-spacing:-0.2px;">Ph</div>
<div class="t c b" style="left:544px;top:527px;width:29px;height:19px;line-height:19px;background:#A9EEC9;border-right:1px solid #C0C0C0;border-bottom:1px solid #C0C0C0;font-size:12px;letter-spacing:-0.2px;">Ch</div>
<div class="t c b" style="left:573px;top:527px;width:29px;height:19px;line-height:19px;background:#A9EEC9;border-right:1px solid #C0C0C0;border-bottom:1px solid #C0C0C0;font-size:12px;letter-spacing:-0.2px;">Bio</div>
<div class="t c b" style="left:602px;top:527px;width:29px;height:19px;line-height:19px;background:#A9EEC9;border-right:1px solid #C0C0C0;border-bottom:1px solid #C0C0C0;font-size:12px;letter-spacing:-0.2px;">If</div>
<div class="t c b" style="left:631px;top:527px;width:29px;height:19px;line-height:19px;background:#A9EEC9;border-right:1px solid #C0C0C0;border-bottom:1px solid #C0C0C0;font-size:12px;letter-spacing:-0.2px;">NWT</div>
<div class="t c b" style="left:660px;top:527px;width:29px;height:19px;line-height:19px;background:#70B4B8;border-right:1px solid #C0C0C0;border-bottom:1px solid #C0C0C0;font-size:12px;letter-spacing:-0.2px;">S</div>
<div class="t c b" style="left:689px;top:527px;width:29px;height:19px;line-height:19px;background:#FFFF55;border-right:1px solid #C0C0C0;border-bottom:1px solid #C0C0C0;font-size:12px;letter-spacing:-0.2px;">Lit</div>
<div class="t c b" style="left:718px;top:527px;width:29px;height:19px;line-height:19px;background:#FFFF55;border-right:1px solid #C0C0C0;border-bottom:1px solid #C0C0C0;font-size:12px;letter-spacing:-0.2px;">VSp</div>
<div class="t c b" style="left:747px;top:527px;width:29px;height:19px;line-height:19px;background:#EE8888;border-right:1px solid #C0C0C0;border-bottom:1px solid #C0C0C0;font-size:12px;letter-spacing:-0.2px;">Psy</div>
<div class="t c b" style="left:776px;top:527px;width:29px;height:19px;line-height:19px;background:#A9EEC9;border-right:1px solid #C0C0C0;border-bottom:1px solid #C0C0C0;font-size:12px;letter-spacing:-0.2px;">Ast</div>
<div class="t c b" style="left:805px;top:527px;width:29px;height:19px;line-height:19px;background:#A9EEC9;border-right:1px solid #C0C0C0;border-bottom:1px solid #C0C0C0;font-size:12px;letter-spacing:-0.2px;">DG</div>
<div class="t c b" style="left:834px;top:527px;width:29px;height:19px;line-height:19px;background:#A9EEC9;border-right:1px solid #C0C0C0;border-bottom:1px solid #C0C0C0;font-size:12px;letter-spacing:-0.2px;">Gl</div>
<div class="t c b" style="left:863px;top:527px;width:29px;height:19px;line-height:19px;background:#A9EEC9;border-right:1px solid #C0C0C0;border-bottom:1px solid #C0C0C0;font-size:12px;letter-spacing:-0.2px;">Inf</div>
<div class="t c b" style="left:892px;top:527px;width:29px;height:19px;line-height:19px;background:#A9EEC9;border-right:1px solid #C0C0C0;border-bottom:1px solid #C0C0C0;font-size:12px;letter-spacing:-0.2px;">VMa</div>
<div class="t c b" style="left:921px;top:527px;width:29px;height:19px;line-height:19px;background:#3DD2EA;border-right:1px solid #C0C0C0;border-bottom:1px solid #C0C0C0;font-size:12px;letter-spacing:-0.2px;">sf</div>
<div class="t c" style="left:19px;top:546px;width:61px;height:19px;line-height:19px;background:#F0F0F0;font-size:11px;letter-spacing:0;">Beleg.</div>
<div class="t c b" style="left:80px;top:546px;width:29px;height:19px;line-height:19px;background:#FFFF55;border-right:1px solid #C0C0C0;border-bottom:1px solid #C0C0C0;font-size:12px;letter-spacing:-0.2px;">m1</div>
<div class="t c b" style="left:109px;top:546px;width:29px;height:19px;line-height:19px;background:#FFFF55;border-right:1px solid #C0C0C0;border-bottom:1px solid #C0C0C0;font-size:12px;letter-spacing:-0.2px;">4</div>
<div class="t c b" style="left:138px;top:546px;width:29px;height:19px;line-height:19px;background:#FFFF55;border-right:1px solid #C0C0C0;border-bottom:1px solid #C0C0C0;font-size:12px;letter-spacing:-0.2px;">.</div>
<div class="t c b" style="left:167px;top:546px;width:29px;height:19px;line-height:19px;background:#FFFF55;border-right:1px solid #C0C0C0;border-bottom:1px solid #C0C0C0;font-size:12px;letter-spacing:-0.2px;">.</div>
<div class="t c b" style="left:196px;top:546px;width:29px;height:19px;line-height:19px;background:#FFFF55;border-right:1px solid #C0C0C0;border-bottom:1px solid #C0C0C0;font-size:12px;letter-spacing:-0.2px;">.</div>
<div class="t c b" style="left:225px;top:546px;width:29px;height:19px;line-height:19px;background:#FFFF55;border-right:1px solid #C0C0C0;border-bottom:1px solid #C0C0C0;font-size:12px;letter-spacing:-0.2px;">.</div>
<div class="t c b" style="left:254px;top:546px;width:29px;height:19px;line-height:19px;background:#FFFF55;border-right:1px solid #C0C0C0;border-bottom:1px solid #C0C0C0;font-size:12px;letter-spacing:-0.2px;">.</div>
<div class="t c b" style="left:283px;top:546px;width:29px;height:19px;line-height:19px;background:#FFFF55;border-right:1px solid #C0C0C0;border-bottom:1px solid #C0C0C0;font-size:12px;letter-spacing:-0.2px;">m2</div>
<div class="t c b" style="left:312px;top:546px;width:29px;height:19px;line-height:19px;background:#EE8888;border-right:1px solid #C0C0C0;border-bottom:1px solid #C0C0C0;font-size:12px;letter-spacing:-0.2px;">4</div>
<div class="t c b" style="left:341px;top:546px;width:29px;height:19px;line-height:19px;background:#EE8888;border-right:1px solid #C0C0C0;border-bottom:1px solid #C0C0C0;font-size:12px;letter-spacing:-0.2px;">L3</div>
<div class="t c b" style="left:370px;top:546px;width:29px;height:19px;line-height:19px;background:#EE8888;border-right:1px solid #C0C0C0;border-bottom:1px solid #C0C0C0;font-size:12px;letter-spacing:-0.2px;">12</div>
<div class="t c b" style="left:399px;top:546px;width:29px;height:19px;line-height:19px;background:#EE8888;border-right:1px solid #C0C0C0;border-bottom:1px solid #C0C0C0;font-size:12px;letter-spacing:-0.2px;">.</div>
<div class="t c b" style="left:428px;top:546px;width:29px;height:19px;line-height:19px;background:#EE8888;border-right:1px solid #C0C0C0;border-bottom:1px solid #C0C0C0;font-size:12px;letter-spacing:-0.2px;">4</div>
<div class="t c b" style="left:457px;top:546px;width:29px;height:19px;line-height:19px;background:#EE8888;border-right:1px solid #C0C0C0;border-bottom:1px solid #C0C0C0;font-size:12px;letter-spacing:-0.2px;">.</div>
<div class="t c b" style="left:486px;top:546px;width:29px;height:19px;line-height:19px;background:#A9EEC9;border-right:1px solid #C0C0C0;border-bottom:1px solid #C0C0C0;font-size:12px;letter-spacing:-0.2px;">L1</div>
<div class="t c b" style="left:515px;top:546px;width:29px;height:19px;line-height:19px;background:#A9EEC9;border-right:1px solid #C0C0C0;border-bottom:1px solid #C0C0C0;font-size:12px;letter-spacing:-0.2px;">L2</div>
<div class="t c b" style="left:544px;top:546px;width:29px;height:19px;line-height:19px;background:#A9EEC9;border-right:1px solid #C0C0C0;border-bottom:1px solid #C0C0C0;font-size:12px;letter-spacing:-0.2px;">.</div>
<div class="t c b" style="left:573px;top:546px;width:29px;height:19px;line-height:19px;background:#A9EEC9;border-right:1px solid #C0C0C0;border-bottom:1px solid #C0C0C0;font-size:12px;letter-spacing:-0.2px;">4</div>
<div class="t c b" style="left:602px;top:546px;width:29px;height:19px;line-height:19px;background:#A9EEC9;border-right:1px solid #C0C0C0;border-bottom:1px solid #C0C0C0;font-size:12px;letter-spacing:-0.2px;">.</div>
<div class="t c b" style="left:631px;top:546px;width:29px;height:19px;line-height:19px;background:#A9EEC9;border-right:1px solid #C0C0C0;border-bottom:1px solid #C0C0C0;font-size:12px;letter-spacing:-0.2px;">.</div>
<div class="t c b" style="left:660px;top:546px;width:29px;height:19px;line-height:19px;background:#70B4B8;border-right:1px solid #C0C0C0;border-bottom:1px solid #C0C0C0;font-size:12px;letter-spacing:-0.2px;">4</div>
<div class="t c b" style="left:689px;top:546px;width:29px;height:19px;line-height:19px;background:#FFFF55;border-right:1px solid #C0C0C0;border-bottom:1px solid #C0C0C0;font-size:12px;letter-spacing:-0.2px;">.</div>
<div class="t c b" style="left:718px;top:546px;width:29px;height:19px;line-height:19px;background:#FFFF55;border-right:1px solid #C0C0C0;border-bottom:1px solid #C0C0C0;font-size:12px;letter-spacing:-0.2px;">.</div>
<div class="t c b" style="left:747px;top:546px;width:29px;height:19px;line-height:19px;background:#EE8888;border-right:1px solid #C0C0C0;border-bottom:1px solid #C0C0C0;font-size:12px;letter-spacing:-0.2px;">.</div>
<div class="t c b" style="left:776px;top:546px;width:29px;height:19px;line-height:19px;background:#A9EEC9;border-right:1px solid #C0C0C0;border-bottom:1px solid #C0C0C0;font-size:12px;letter-spacing:-0.2px;">.</div>
<div class="t c b" style="left:805px;top:546px;width:29px;height:19px;line-height:19px;background:#A9EEC9;border-right:1px solid #C0C0C0;border-bottom:1px solid #C0C0C0;font-size:12px;letter-spacing:-0.2px;">.</div>
<div class="t c b" style="left:834px;top:546px;width:29px;height:19px;line-height:19px;background:#A9EEC9;border-right:1px solid #C0C0C0;border-bottom:1px solid #C0C0C0;font-size:12px;letter-spacing:-0.2px;">.</div>
<div class="t c b" style="left:863px;top:546px;width:29px;height:19px;line-height:19px;background:#A9EEC9;border-right:1px solid #C0C0C0;border-bottom:1px solid #C0C0C0;font-size:12px;letter-spacing:-0.2px;">.</div>
<div class="t c b" style="left:892px;top:546px;width:29px;height:19px;line-height:19px;background:#A9EEC9;border-right:1px solid #C0C0C0;border-bottom:1px solid #C0C0C0;font-size:12px;letter-spacing:-0.2px;">.</div>
<div class="t c b" style="left:921px;top:546px;width:29px;height:19px;line-height:19px;background:#3DD2EA;border-right:1px solid #C0C0C0;border-bottom:1px solid #C0C0C0;font-size:12px;letter-spacing:-0.2px;">12</div>
<div class="t c" style="left:19px;top:565px;width:61px;height:19px;line-height:19px;background:#F0F0F0;font-size:11px;letter-spacing:0;">Pfl'Anr.</div>
<div class="t c b" style="left:80px;top:565px;width:29px;height:19px;line-height:19px;background:#FFFF55;border-right:1px solid #C0C0C0;border-bottom:1px solid #C0C0C0;font-size:12px;letter-spacing:-0.2px;">4</div>
<div class="t c b" style="left:109px;top:565px;width:29px;height:19px;line-height:19px;background:#FFFF55;border-right:1px solid #C0C0C0;border-bottom:1px solid #C0C0C0;font-size:12px;letter-spacing:-0.2px;">4</div>
<div class="t c b" style="left:138px;top:565px;width:29px;height:19px;line-height:19px;background:#FFFF55;border-right:1px solid #C0C0C0;border-bottom:1px solid #C0C0C0;font-size:12px;letter-spacing:-0.2px;">.</div>
<div class="t c b" style="left:167px;top:565px;width:29px;height:19px;line-height:19px;background:#FFFF55;border-right:1px solid #C0C0C0;border-bottom:1px solid #C0C0C0;font-size:12px;letter-spacing:-0.2px;">.</div>
<div class="t c b" style="left:196px;top:565px;width:29px;height:19px;line-height:19px;background:#FFFF55;border-right:1px solid #C0C0C0;border-bottom:1px solid #C0C0C0;font-size:12px;letter-spacing:-0.2px;">.</div>
<div class="t c b" style="left:225px;top:565px;width:29px;height:19px;line-height:19px;background:#FFFF55;border-right:1px solid #C0C0C0;border-bottom:1px solid #C0C0C0;font-size:12px;letter-spacing:-0.2px;">.</div>
<div class="t c b" style="left:254px;top:565px;width:29px;height:19px;line-height:19px;background:#FFFF55;border-right:1px solid #C0C0C0;border-bottom:1px solid #C0C0C0;font-size:12px;letter-spacing:-0.2px;">.</div>
<div class="t c b" style="left:283px;top:565px;width:29px;height:19px;line-height:19px;background:#FFFF55;border-right:1px solid #C0C0C0;border-bottom:1px solid #C0C0C0;font-size:12px;letter-spacing:-0.2px;">4</div>
<div class="t c b" style="left:312px;top:565px;width:29px;height:19px;line-height:19px;background:#EE8888;border-right:1px solid #C0C0C0;border-bottom:1px solid #C0C0C0;font-size:12px;letter-spacing:-0.2px;">4</div>
<div class="t c b" style="left:341px;top:565px;width:29px;height:19px;line-height:19px;background:#EE8888;border-right:1px solid #C0C0C0;border-bottom:1px solid #C0C0C0;font-size:12px;letter-spacing:-0.2px;">4</div>
<div class="t c b" style="left:370px;top:565px;width:29px;height:19px;line-height:19px;background:#EE8888;border-right:1px solid #C0C0C0;border-bottom:1px solid #C0C0C0;font-size:12px;letter-spacing:-0.2px;">2</div>
<div class="t c b" style="left:399px;top:565px;width:29px;height:19px;line-height:19px;background:#EE8888;border-right:1px solid #C0C0C0;border-bottom:1px solid #C0C0C0;font-size:12px;letter-spacing:-0.2px;">.</div>
<div class="t c b" style="left:428px;top:565px;width:29px;height:19px;line-height:19px;background:#EE8888;border-right:1px solid #C0C0C0;border-bottom:1px solid #C0C0C0;font-size:12px;letter-spacing:-0.2px;">.</div>
<div class="t c b" style="left:457px;top:565px;width:29px;height:19px;line-height:19px;background:#EE8888;border-right:1px solid #C0C0C0;border-bottom:1px solid #C0C0C0;font-size:12px;letter-spacing:-0.2px;">.</div>
<div class="t c b" style="left:486px;top:565px;width:29px;height:19px;line-height:19px;background:#A9EEC9;border-right:1px solid #C0C0C0;border-bottom:1px solid #C0C0C0;font-size:12px;letter-spacing:-0.2px;">4</div>
<div class="t c b" style="left:515px;top:565px;width:29px;height:19px;line-height:19px;background:#A9EEC9;border-right:1px solid #C0C0C0;border-bottom:1px solid #C0C0C0;font-size:12px;letter-spacing:-0.2px;">4</div>
<div class="t c b" style="left:544px;top:565px;width:29px;height:19px;line-height:19px;background:#A9EEC9;border-right:1px solid #C0C0C0;border-bottom:1px solid #C0C0C0;font-size:12px;letter-spacing:-0.2px;">.</div>
<div class="t c b" style="left:573px;top:565px;width:29px;height:19px;line-height:19px;background:#A9EEC9;border-right:1px solid #C0C0C0;border-bottom:1px solid #C0C0C0;font-size:12px;letter-spacing:-0.2px;">4</div>
<div class="t c b" style="left:602px;top:565px;width:29px;height:19px;line-height:19px;background:#A9EEC9;border-right:1px solid #C0C0C0;border-bottom:1px solid #C0C0C0;font-size:12px;letter-spacing:-0.2px;">.</div>
<div class="t c b" style="left:631px;top:565px;width:29px;height:19px;line-height:19px;background:#A9EEC9;border-right:1px solid #C0C0C0;border-bottom:1px solid #C0C0C0;font-size:12px;letter-spacing:-0.2px;">.</div>
<div class="t c b" style="left:660px;top:565px;width:29px;height:19px;line-height:19px;background:#70B4B8;border-right:1px solid #C0C0C0;border-bottom:1px solid #C0C0C0;font-size:12px;letter-spacing:-0.2px;">.</div>
<div class="t c b" style="left:689px;top:565px;width:29px;height:19px;line-height:19px;background:#FFFF55;border-right:1px solid #C0C0C0;border-bottom:1px solid #C0C0C0;font-size:12px;letter-spacing:-0.2px;">.</div>
<div class="t c b" style="left:718px;top:565px;width:29px;height:19px;line-height:19px;background:#FFFF55;border-right:1px solid #C0C0C0;border-bottom:1px solid #C0C0C0;font-size:12px;letter-spacing:-0.2px;">.</div>
<div class="t c b" style="left:747px;top:565px;width:29px;height:19px;line-height:19px;background:#EE8888;border-right:1px solid #C0C0C0;border-bottom:1px solid #C0C0C0;font-size:12px;letter-spacing:-0.2px;">.</div>
<div class="t c b" style="left:776px;top:565px;width:29px;height:19px;line-height:19px;background:#A9EEC9;border-right:1px solid #C0C0C0;border-bottom:1px solid #C0C0C0;font-size:12px;letter-spacing:-0.2px;">.</div>
<div class="t c b" style="left:805px;top:565px;width:29px;height:19px;line-height:19px;background:#A9EEC9;border-right:1px solid #C0C0C0;border-bottom:1px solid #C0C0C0;font-size:12px;letter-spacing:-0.2px;">.</div>
<div class="t c b" style="left:834px;top:565px;width:29px;height:19px;line-height:19px;background:#A9EEC9;border-right:1px solid #C0C0C0;border-bottom:1px solid #C0C0C0;font-size:12px;letter-spacing:-0.2px;">.</div>
<div class="t c b" style="left:863px;top:565px;width:29px;height:19px;line-height:19px;background:#A9EEC9;border-right:1px solid #C0C0C0;border-bottom:1px solid #C0C0C0;font-size:12px;letter-spacing:-0.2px;">.</div>
<div class="t c b" style="left:892px;top:565px;width:29px;height:19px;line-height:19px;background:#A9EEC9;border-right:1px solid #C0C0C0;border-bottom:1px solid #C0C0C0;font-size:12px;letter-spacing:-0.2px;">.</div>
<div class="t c b" style="left:921px;top:565px;width:29px;height:19px;line-height:19px;background:#3DD2EA;border-right:1px solid #C0C0C0;border-bottom:1px solid #C0C0C0;font-size:12px;letter-spacing:-0.2px;">.</div>
<div class="t c" style="left:19px;top:584px;width:61px;height:19px;line-height:19px;background:#F0F0F0;font-size:11px;letter-spacing:0;">Anr.</div>
<div class="t c b" style="left:80px;top:584px;width:29px;height:19px;line-height:19px;background:#FFFF55;border-right:1px solid #C0C0C0;border-bottom:1px solid #C0C0C0;font-size:12px;letter-spacing:-0.2px;">4</div>
<div class="t c b" style="left:109px;top:584px;width:29px;height:19px;line-height:19px;background:#FFFF55;border-right:1px solid #C0C0C0;border-bottom:1px solid #C0C0C0;font-size:12px;letter-spacing:-0.2px;">4</div>
<div class="t c b" style="left:138px;top:584px;width:29px;height:19px;line-height:19px;background:#FFFF55;border-right:1px solid #C0C0C0;border-bottom:1px solid #C0C0C0;font-size:12px;letter-spacing:-0.2px;">.</div>
<div class="t c b" style="left:167px;top:584px;width:29px;height:19px;line-height:19px;background:#FFFF55;border-right:1px solid #C0C0C0;border-bottom:1px solid #C0C0C0;font-size:12px;letter-spacing:-0.2px;">.</div>
<div class="t c b" style="left:196px;top:584px;width:29px;height:19px;line-height:19px;background:#FFFF55;border-right:1px solid #C0C0C0;border-bottom:1px solid #C0C0C0;font-size:12px;letter-spacing:-0.2px;">.</div>
<div class="t c b" style="left:225px;top:584px;width:29px;height:19px;line-height:19px;background:#FFFF55;border-right:1px solid #C0C0C0;border-bottom:1px solid #C0C0C0;font-size:12px;letter-spacing:-0.2px;">.</div>
<div class="t c b" style="left:254px;top:584px;width:29px;height:19px;line-height:19px;background:#FFFF55;border-right:1px solid #C0C0C0;border-bottom:1px solid #C0C0C0;font-size:12px;letter-spacing:-0.2px;">.</div>
<div class="t c b" style="left:283px;top:584px;width:29px;height:19px;line-height:19px;background:#FFFF55;border-right:1px solid #C0C0C0;border-bottom:1px solid #C0C0C0;font-size:12px;letter-spacing:-0.2px;">4</div>
<div class="t c b" style="left:312px;top:584px;width:29px;height:19px;line-height:19px;background:#EE8888;border-right:1px solid #C0C0C0;border-bottom:1px solid #C0C0C0;font-size:12px;letter-spacing:-0.2px;">4</div>
<div class="t c b" style="left:341px;top:584px;width:29px;height:19px;line-height:19px;background:#EE8888;border-right:1px solid #C0C0C0;border-bottom:1px solid #C0C0C0;font-size:12px;letter-spacing:-0.2px;">4d</div>
<div class="t c b" style="left:370px;top:584px;width:29px;height:19px;line-height:19px;background:#EE8888;border-right:1px solid #C0C0C0;border-bottom:1px solid #C0C0C0;font-size:12px;letter-spacing:-0.2px;">2</div>
<div class="t c b" style="left:399px;top:584px;width:29px;height:19px;line-height:19px;background:#EE8888;border-right:1px solid #C0C0C0;border-bottom:1px solid #C0C0C0;font-size:12px;letter-spacing:-0.2px;">.</div>
<div class="t c b" style="left:428px;top:584px;width:29px;height:19px;line-height:19px;background:#EE8888;border-right:1px solid #C0C0C0;border-bottom:1px solid #C0C0C0;font-size:12px;letter-spacing:-0.2px;">4</div>
<div class="t c b" style="left:457px;top:584px;width:29px;height:19px;line-height:19px;background:#EE8888;border-right:1px solid #C0C0C0;border-bottom:1px solid #C0C0C0;font-size:12px;letter-spacing:-0.2px;">.</div>
<div class="t c b" style="left:486px;top:584px;width:29px;height:19px;line-height:19px;background:#A9EEC9;border-right:1px solid #C0C0C0;border-bottom:1px solid #C0C0C0;font-size:12px;letter-spacing:-0.2px;">4d</div>
<div class="t c b" style="left:515px;top:584px;width:29px;height:19px;line-height:19px;background:#A9EEC9;border-right:1px solid #C0C0C0;border-bottom:1px solid #C0C0C0;font-size:12px;letter-spacing:-0.2px;">4</div>
<div class="t c b" style="left:544px;top:584px;width:29px;height:19px;line-height:19px;background:#A9EEC9;border-right:1px solid #C0C0C0;border-bottom:1px solid #C0C0C0;font-size:12px;letter-spacing:-0.2px;">.</div>
<div class="t c b" style="left:573px;top:584px;width:29px;height:19px;line-height:19px;background:#A9EEC9;border-right:1px solid #C0C0C0;border-bottom:1px solid #C0C0C0;font-size:12px;letter-spacing:-0.2px;">4</div>
<div class="t c b" style="left:602px;top:584px;width:29px;height:19px;line-height:19px;background:#A9EEC9;border-right:1px solid #C0C0C0;border-bottom:1px solid #C0C0C0;font-size:12px;letter-spacing:-0.2px;">.</div>
<div class="t c b" style="left:631px;top:584px;width:29px;height:19px;line-height:19px;background:#A9EEC9;border-right:1px solid #C0C0C0;border-bottom:1px solid #C0C0C0;font-size:12px;letter-spacing:-0.2px;">.</div>
<div class="t c b" style="left:660px;top:584px;width:29px;height:19px;line-height:19px;background:#70B4B8;border-right:1px solid #C0C0C0;border-bottom:1px solid #C0C0C0;font-size:12px;letter-spacing:-0.2px;">0</div>
<div class="t c b" style="left:689px;top:584px;width:29px;height:19px;line-height:19px;background:#FFFF55;border-right:1px solid #C0C0C0;border-bottom:1px solid #C0C0C0;font-size:12px;letter-spacing:-0.2px;">.</div>
<div class="t c b" style="left:718px;top:584px;width:29px;height:19px;line-height:19px;background:#FFFF55;border-right:1px solid #C0C0C0;border-bottom:1px solid #C0C0C0;font-size:12px;letter-spacing:-0.2px;">.</div>
<div class="t c b" style="left:747px;top:584px;width:29px;height:19px;line-height:19px;background:#EE8888;border-right:1px solid #C0C0C0;border-bottom:1px solid #C0C0C0;font-size:12px;letter-spacing:-0.2px;">.</div>
<div class="t c b" style="left:776px;top:584px;width:29px;height:19px;line-height:19px;background:#A9EEC9;border-right:1px solid #C0C0C0;border-bottom:1px solid #C0C0C0;font-size:12px;letter-spacing:-0.2px;">.</div>
<div class="t c b" style="left:805px;top:584px;width:29px;height:19px;line-height:19px;background:#A9EEC9;border-right:1px solid #C0C0C0;border-bottom:1px solid #C0C0C0;font-size:12px;letter-spacing:-0.2px;">.</div>
<div class="t c b" style="left:834px;top:584px;width:29px;height:19px;line-height:19px;background:#A9EEC9;border-right:1px solid #C0C0C0;border-bottom:1px solid #C0C0C0;font-size:12px;letter-spacing:-0.2px;">.</div>
<div class="t c b" style="left:863px;top:584px;width:29px;height:19px;line-height:19px;background:#A9EEC9;border-right:1px solid #C0C0C0;border-bottom:1px solid #C0C0C0;font-size:12px;letter-spacing:-0.2px;">.</div>
<div class="t c b" style="left:892px;top:584px;width:29px;height:19px;line-height:19px;background:#A9EEC9;border-right:1px solid #C0C0C0;border-bottom:1px solid #C0C0C0;font-size:12px;letter-spacing:-0.2px;">.</div>
<div class="t c b" style="left:921px;top:584px;width:29px;height:19px;line-height:19px;background:#3DD2EA;border-right:1px solid #C0C0C0;border-bottom:1px solid #C0C0C0;font-size:12px;letter-spacing:-0.2px;">2</div>
<div class="t c" style="left:19px;top:603px;width:61px;height:19px;line-height:19px;background:#F0F0F0;font-size:11px;letter-spacing:0;">11.1</div>
<div class="t c bi" style="left:80px;top:603px;width:29px;height:19px;line-height:19px;background:#FFFFE1;border-right:1px solid #C0C0C0;border-bottom:1px solid #C0C0C0;font-size:12.5px;letter-spacing:-0.2px;">08</div>
<div class="t c bi" style="left:109px;top:603px;width:29px;height:19px;line-height:19px;background:#FFFFE1;border-right:1px solid #C0C0C0;border-bottom:1px solid #C0C0C0;font-size:12.5px;letter-spacing:-0.2px;">07</div>
<div class="t c " style="left:138px;top:603px;width:29px;height:19px;line-height:19px;background:#FFFFE1;border-right:1px solid #C0C0C0;border-bottom:1px solid #C0C0C0;font-size:12.5px;letter-spacing:-0.2px;">.</div>
<div class="t c " style="left:167px;top:603px;width:29px;height:19px;line-height:19px;background:#FFFFE1;border-right:1px solid #C0C0C0;border-bottom:1px solid #C0C0C0;font-size:12.5px;letter-spacing:-0.2px;">.</div>
<div class="t c " style="left:196px;top:603px;width:29px;height:19px;line-height:19px;background:#FFFFE1;border-right:1px solid #C0C0C0;border-bottom:1px solid #C0C0C0;font-size:12.5px;letter-spacing:-0.2px;">.</div>
<div class="t c " style="left:225px;top:603px;width:29px;height:19px;line-height:19px;background:#FFFFE1;border-right:1px solid #C0C0C0;border-bottom:1px solid #C0C0C0;font-size:12.5px;letter-spacing:-0.2px;">.</div>
<div class="t c " style="left:254px;top:603px;width:29px;height:19px;line-height:19px;background:#FFFFE1;border-right:1px solid #C0C0C0;border-bottom:1px solid #C0C0C0;font-size:12.5px;letter-spacing:-0.2px;">.</div>
<div class="t c " style="left:283px;top:603px;width:29px;height:19px;line-height:19px;background:#FFFFE1;border-right:1px solid #C0C0C0;border-bottom:1px solid #C0C0C0;font-size:12.5px;letter-spacing:-0.2px;">09</div>
<div class="t c bi" style="left:312px;top:603px;width:29px;height:19px;line-height:19px;background:#FFFFE1;border-right:1px solid #C0C0C0;border-bottom:1px solid #C0C0C0;font-size:12.5px;letter-spacing:-0.2px;">09</div>
<div class="t c " style="left:341px;top:603px;width:29px;height:19px;line-height:19px;background:#FFFFE1;border-right:1px solid #C0C0C0;border-bottom:1px solid #C0C0C0;font-size:12.5px;letter-spacing:-0.2px;">05</div>
<div class="t c bi" style="left:370px;top:603px;width:29px;height:19px;line-height:19px;background:#FFFFE1;border-right:1px solid #C0C0C0;border-bottom:1px solid #C0C0C0;font-size:12.5px;letter-spacing:-0.2px;">10</div>
<div class="t c " style="left:399px;top:603px;width:29px;height:19px;line-height:19px;background:#FFFFE1;border-right:1px solid #C0C0C0;border-bottom:1px solid #C0C0C0;font-size:12.5px;letter-spacing:-0.2px;">.</div>
<div class="t c " style="left:428px;top:603px;width:29px;height:19px;line-height:19px;background:#FFFFE1;border-right:1px solid #C0C0C0;border-bottom:1px solid #C0C0C0;font-size:12.5px;letter-spacing:-0.2px;">10</div>
<div class="t c " style="left:457px;top:603px;width:29px;height:19px;line-height:19px;background:#FFFFE1;border-right:1px solid #C0C0C0;border-bottom:1px solid #C0C0C0;font-size:12.5px;letter-spacing:-0.2px;">.</div>
<div class="t c b" style="left:486px;top:603px;width:29px;height:19px;line-height:19px;background:#FFFFE1;border-right:1px solid #C0C0C0;border-bottom:1px solid #C0C0C0;font-size:12.5px;letter-spacing:-0.2px;">06</div>
<div class="t c b" style="left:515px;top:603px;width:29px;height:19px;line-height:19px;background:#FFFFE1;border-right:1px solid #C0C0C0;border-bottom:1px solid #C0C0C0;font-size:12.5px;letter-spacing:-0.2px;">08</div>
<div class="t c " style="left:544px;top:603px;width:29px;height:19px;line-height:19px;background:#FFFFE1;border-right:1px solid #C0C0C0;border-bottom:1px solid #C0C0C0;font-size:12.5px;letter-spacing:-0.2px;">.</div>
<div class="t c bi" style="left:573px;top:603px;width:29px;height:19px;line-height:19px;background:#FFFFE1;border-right:1px solid #C0C0C0;border-bottom:1px solid #C0C0C0;font-size:12.5px;letter-spacing:-0.2px;">08</div>
<div class="t c " style="left:602px;top:603px;width:29px;height:19px;line-height:19px;background:#FFFFE1;border-right:1px solid #C0C0C0;border-bottom:1px solid #C0C0C0;font-size:12.5px;letter-spacing:-0.2px;">.</div>
<div class="t c " style="left:631px;top:603px;width:29px;height:19px;line-height:19px;background:#FFFFE1;border-right:1px solid #C0C0C0;border-bottom:1px solid #C0C0C0;font-size:12.5px;letter-spacing:-0.2px;">.</div>
<div class="t c o" style="left:660px;top:603px;width:29px;height:19px;line-height:19px;background:#FFFFE1;border-right:1px solid #C0C0C0;border-bottom:1px solid #C0C0C0;font-size:12.5px;letter-spacing:-0.2px;">*3)</div>
<div class="t c " style="left:689px;top:603px;width:29px;height:19px;line-height:19px;background:#FFFFE1;border-right:1px solid #C0C0C0;border-bottom:1px solid #C0C0C0;font-size:12.5px;letter-spacing:-0.2px;">.</div>
<div class="t c " style="left:718px;top:603px;width:29px;height:19px;line-height:19px;background:#FFFFE1;border-right:1px solid #C0C0C0;border-bottom:1px solid #C0C0C0;font-size:12.5px;letter-spacing:-0.2px;">.</div>
<div class="t c " style="left:747px;top:603px;width:29px;height:19px;line-height:19px;background:#FFFFE1;border-right:1px solid #C0C0C0;border-bottom:1px solid #C0C0C0;font-size:12.5px;letter-spacing:-0.2px;">.</div>
<div class="t c " style="left:776px;top:603px;width:29px;height:19px;line-height:19px;background:#FFFFE1;border-right:1px solid #C0C0C0;border-bottom:1px solid #C0C0C0;font-size:12.5px;letter-spacing:-0.2px;">.</div>
<div class="t c " style="left:805px;top:603px;width:29px;height:19px;line-height:19px;background:#FFFFE1;border-right:1px solid #C0C0C0;border-bottom:1px solid #C0C0C0;font-size:12.5px;letter-spacing:-0.2px;">.</div>
<div class="t c " style="left:834px;top:603px;width:29px;height:19px;line-height:19px;background:#FFFFE1;border-right:1px solid #C0C0C0;border-bottom:1px solid #C0C0C0;font-size:12.5px;letter-spacing:-0.2px;">.</div>
<div class="t c " style="left:863px;top:603px;width:29px;height:19px;line-height:19px;background:#FFFFE1;border-right:1px solid #C0C0C0;border-bottom:1px solid #C0C0C0;font-size:12.5px;letter-spacing:-0.2px;">.</div>
<div class="t c " style="left:892px;top:603px;width:29px;height:19px;line-height:19px;background:#FFFFE1;border-right:1px solid #C0C0C0;border-bottom:1px solid #C0C0C0;font-size:12.5px;letter-spacing:-0.2px;">.</div>
<div class="t c " style="left:921px;top:603px;width:29px;height:19px;line-height:19px;background:#fff;border-right:1px solid #C0C0C0;border-bottom:1px solid #C0C0C0;font-size:12.5px;letter-spacing:-0.2px;">12</div>
<div class="t c" style="left:19px;top:622px;width:61px;height:19px;line-height:19px;background:#F0F0F0;font-size:11px;letter-spacing:0;">11.2</div>
<div class="t c bi" style="left:80px;top:622px;width:29px;height:19px;line-height:19px;background:#FFFFE1;border-right:1px solid #C0C0C0;border-bottom:1px solid #C0C0C0;font-size:12.5px;letter-spacing:-0.2px;">08</div>
<div class="t c bi" style="left:109px;top:622px;width:29px;height:19px;line-height:19px;background:#FFFFE1;border-right:1px solid #C0C0C0;border-bottom:1px solid #C0C0C0;font-size:12.5px;letter-spacing:-0.2px;">07</div>
<div class="t c " style="left:138px;top:622px;width:29px;height:19px;line-height:19px;background:#FFFFE1;border-right:1px solid #C0C0C0;border-bottom:1px solid #C0C0C0;font-size:12.5px;letter-spacing:-0.2px;">.</div>
<div class="t c " style="left:167px;top:622px;width:29px;height:19px;line-height:19px;background:#FFFFE1;border-right:1px solid #C0C0C0;border-bottom:1px solid #C0C0C0;font-size:12.5px;letter-spacing:-0.2px;">.</div>
<div class="t c " style="left:196px;top:622px;width:29px;height:19px;line-height:19px;background:#FFFFE1;border-right:1px solid #C0C0C0;border-bottom:1px solid #C0C0C0;font-size:12.5px;letter-spacing:-0.2px;">.</div>
<div class="t c " style="left:225px;top:622px;width:29px;height:19px;line-height:19px;background:#FFFFE1;border-right:1px solid #C0C0C0;border-bottom:1px solid #C0C0C0;font-size:12.5px;letter-spacing:-0.2px;">.</div>
<div class="t c " style="left:254px;top:622px;width:29px;height:19px;line-height:19px;background:#FFFFE1;border-right:1px solid #C0C0C0;border-bottom:1px solid #C0C0C0;font-size:12.5px;letter-spacing:-0.2px;">.</div>
<div class="t c " style="left:283px;top:622px;width:29px;height:19px;line-height:19px;background:#FFFFE1;border-right:1px solid #C0C0C0;border-bottom:1px solid #C0C0C0;font-size:12.5px;letter-spacing:-0.2px;">12</div>
<div class="t c bi" style="left:312px;top:622px;width:29px;height:19px;line-height:19px;background:#FFFFE1;border-right:1px solid #C0C0C0;border-bottom:1px solid #C0C0C0;font-size:12.5px;letter-spacing:-0.2px;">10</div>
<div class="t c b" style="left:341px;top:622px;width:29px;height:19px;line-height:19px;background:#FFFFE1;border-right:1px solid #C0C0C0;border-bottom:1px solid #C0C0C0;font-size:12.5px;letter-spacing:-0.2px;">08</div>
<div class="t c bi" style="left:370px;top:622px;width:29px;height:19px;line-height:19px;background:#FFFFE1;border-right:1px solid #C0C0C0;border-bottom:1px solid #C0C0C0;font-size:12.5px;letter-spacing:-0.2px;">10</div>
<div class="t c " style="left:399px;top:622px;width:29px;height:19px;line-height:19px;background:#FFFFE1;border-right:1px solid #C0C0C0;border-bottom:1px solid #C0C0C0;font-size:12.5px;letter-spacing:-0.2px;">.</div>
<div class="t c o" style="left:428px;top:622px;width:29px;height:19px;line-height:19px;background:#FFFFE1;border-right:1px solid #C0C0C0;border-bottom:1px solid #C0C0C0;font-size:12.5px;letter-spacing:-0.2px;">*4</div>
<div class="t c " style="left:457px;top:622px;width:29px;height:19px;line-height:19px;background:#FFFFE1;border-right:1px solid #C0C0C0;border-bottom:1px solid #C0C0C0;font-size:12.5px;letter-spacing:-0.2px;">.</div>
<div class="t c b" style="left:486px;top:622px;width:29px;height:19px;line-height:19px;background:#FFFFE1;border-right:1px solid #C0C0C0;border-bottom:1px solid #C0C0C0;font-size:12.5px;letter-spacing:-0.2px;">08</div>
<div class="t c o" style="left:515px;top:622px;width:29px;height:19px;line-height:19px;background:#FFFFE1;border-right:1px solid #C0C0C0;border-bottom:1px solid #C0C0C0;font-size:12.5px;letter-spacing:-0.2px;">*3</div>
<div class="t c " style="left:544px;top:622px;width:29px;height:19px;line-height:19px;background:#FFFFE1;border-right:1px solid #C0C0C0;border-bottom:1px solid #C0C0C0;font-size:12.5px;letter-spacing:-0.2px;">.</div>
<div class="t c bi" style="left:573px;top:622px;width:29px;height:19px;line-height:19px;background:#FFFFE1;border-right:1px solid #C0C0C0;border-bottom:1px solid #C0C0C0;font-size:12.5px;letter-spacing:-0.2px;">07</div>
<div class="t c " style="left:602px;top:622px;width:29px;height:19px;line-height:19px;background:#FFFFE1;border-right:1px solid #C0C0C0;border-bottom:1px solid #C0C0C0;font-size:12.5px;letter-spacing:-0.2px;">.</div>
<div class="t c " style="left:631px;top:622px;width:29px;height:19px;line-height:19px;background:#FFFFE1;border-right:1px solid #C0C0C0;border-bottom:1px solid #C0C0C0;font-size:12.5px;letter-spacing:-0.2px;">.</div>
<div class="t c o" style="left:660px;top:622px;width:29px;height:19px;line-height:19px;background:#FFFFE1;border-right:1px solid #C0C0C0;border-bottom:1px solid #C0C0C0;font-size:12.5px;letter-spacing:-0.2px;">*4)</div>
<div class="t c " style="left:689px;top:622px;width:29px;height:19px;line-height:19px;background:#FFFFE1;border-right:1px solid #C0C0C0;border-bottom:1px solid #C0C0C0;font-size:12.5px;letter-spacing:-0.2px;">.</div>
<div class="t c " style="left:718px;top:622px;width:29px;height:19px;line-height:19px;background:#FFFFE1;border-right:1px solid #C0C0C0;border-bottom:1px solid #C0C0C0;font-size:12.5px;letter-spacing:-0.2px;">.</div>
<div class="t c " style="left:747px;top:622px;width:29px;height:19px;line-height:19px;background:#FFFFE1;border-right:1px solid #C0C0C0;border-bottom:1px solid #C0C0C0;font-size:12.5px;letter-spacing:-0.2px;">.</div>
<div class="t c " style="left:776px;top:622px;width:29px;height:19px;line-height:19px;background:#FFFFE1;border-right:1px solid #C0C0C0;border-bottom:1px solid #C0C0C0;font-size:12.5px;letter-spacing:-0.2px;">.</div>
<div class="t c " style="left:805px;top:622px;width:29px;height:19px;line-height:19px;background:#FFFFE1;border-right:1px solid #C0C0C0;border-bottom:1px solid #C0C0C0;font-size:12.5px;letter-spacing:-0.2px;">.</div>
<div class="t c " style="left:834px;top:622px;width:29px;height:19px;line-height:19px;background:#FFFFE1;border-right:1px solid #C0C0C0;border-bottom:1px solid #C0C0C0;font-size:12.5px;letter-spacing:-0.2px;">.</div>
<div class="t c " style="left:863px;top:622px;width:29px;height:19px;line-height:19px;background:#FFFFE1;border-right:1px solid #C0C0C0;border-bottom:1px solid #C0C0C0;font-size:12.5px;letter-spacing:-0.2px;">.</div>
<div class="t c " style="left:892px;top:622px;width:29px;height:19px;line-height:19px;background:#FFFFE1;border-right:1px solid #C0C0C0;border-bottom:1px solid #C0C0C0;font-size:12.5px;letter-spacing:-0.2px;">.</div>
<div class="t c " style="left:921px;top:622px;width:29px;height:19px;line-height:19px;background:#fff;border-right:1px solid #C0C0C0;border-bottom:1px solid #C0C0C0;font-size:12.5px;letter-spacing:-0.2px;">12</div>
<div class="t c" style="left:19px;top:641px;width:61px;height:19px;line-height:19px;background:#F0F0F0;font-size:11px;letter-spacing:0;">12.1</div>
<div class="t c bi" style="left:80px;top:641px;width:29px;height:19px;line-height:19px;background:#FFFFE1;border-right:1px solid #C0C0C0;border-bottom:1px solid #C0C0C0;font-size:12.5px;letter-spacing:-0.2px;">08</div>
<div class="t c bi" style="left:109px;top:641px;width:29px;height:19px;line-height:19px;background:#FFFFE1;border-right:1px solid #C0C0C0;border-bottom:1px solid #C0C0C0;font-size:12.5px;letter-spacing:-0.2px;">08</div>
<div class="t c " style="left:138px;top:641px;width:29px;height:19px;line-height:19px;background:#FFFFE1;border-right:1px solid #C0C0C0;border-bottom:1px solid #C0C0C0;font-size:12.5px;letter-spacing:-0.2px;">.</div>
<div class="t c " style="left:167px;top:641px;width:29px;height:19px;line-height:19px;background:#FFFFE1;border-right:1px solid #C0C0C0;border-bottom:1px solid #C0C0C0;font-size:12.5px;letter-spacing:-0.2px;">.</div>
<div class="t c " style="left:196px;top:641px;width:29px;height:19px;line-height:19px;background:#FFFFE1;border-right:1px solid #C0C0C0;border-bottom:1px solid #C0C0C0;font-size:12.5px;letter-spacing:-0.2px;">.</div>
<div class="t c " style="left:225px;top:641px;width:29px;height:19px;line-height:19px;background:#FFFFE1;border-right:1px solid #C0C0C0;border-bottom:1px solid #C0C0C0;font-size:12.5px;letter-spacing:-0.2px;">.</div>
<div class="t c " style="left:254px;top:641px;width:29px;height:19px;line-height:19px;background:#FFFFE1;border-right:1px solid #C0C0C0;border-bottom:1px solid #C0C0C0;font-size:12.5px;letter-spacing:-0.2px;">.</div>
<div class="t c o" style="left:283px;top:641px;width:29px;height:19px;line-height:19px;background:#FFFFE1;border-right:1px solid #C0C0C0;border-bottom:1px solid #C0C0C0;font-size:12.5px;letter-spacing:-0.2px;">*3</div>
<div class="t c bi" style="left:312px;top:641px;width:29px;height:19px;line-height:19px;background:#FFFFE1;border-right:1px solid #C0C0C0;border-bottom:1px solid #C0C0C0;font-size:12.5px;letter-spacing:-0.2px;">11</div>
<div class="t c b" style="left:341px;top:641px;width:29px;height:19px;line-height:19px;background:#FFFFE1;border-right:1px solid #C0C0C0;border-bottom:1px solid #C0C0C0;font-size:12.5px;letter-spacing:-0.2px;">07</div>
<div class="t c " style="left:370px;top:641px;width:29px;height:19px;line-height:19px;background:#FFFFE1;border-right:1px solid #C0C0C0;border-bottom:1px solid #C0C0C0;font-size:12.5px;letter-spacing:-0.2px;">.</div>
<div class="t c " style="left:399px;top:641px;width:29px;height:19px;line-height:19px;background:#FFFFE1;border-right:1px solid #C0C0C0;border-bottom:1px solid #C0C0C0;font-size:12.5px;letter-spacing:-0.2px;">.</div>
<div class="t c o" style="left:428px;top:641px;width:29px;height:19px;line-height:19px;background:#FFFFE1;border-right:1px solid #C0C0C0;border-bottom:1px solid #C0C0C0;font-size:12.5px;letter-spacing:-0.2px;">*4</div>
<div class="t c " style="left:457px;top:641px;width:29px;height:19px;line-height:19px;background:#FFFFE1;border-right:1px solid #C0C0C0;border-bottom:1px solid #C0C0C0;font-size:12.5px;letter-spacing:-0.2px;">.</div>
<div class="t c b" style="left:486px;top:641px;width:29px;height:19px;line-height:19px;background:#FFFFE1;border-right:1px solid #C0C0C0;border-bottom:1px solid #C0C0C0;font-size:12.5px;letter-spacing:-0.2px;">07</div>
<div class="t c o" style="left:515px;top:641px;width:29px;height:19px;line-height:19px;background:#FFFFE1;border-right:1px solid #C0C0C0;border-bottom:1px solid #C0C0C0;font-size:12.5px;letter-spacing:-0.2px;">*4</div>
<div class="t c " style="left:544px;top:641px;width:29px;height:19px;line-height:19px;background:#FFFFE1;border-right:1px solid #C0C0C0;border-bottom:1px solid #C0C0C0;font-size:12.5px;letter-spacing:-0.2px;">.</div>
<div class="t c bi" style="left:573px;top:641px;width:29px;height:19px;line-height:19px;background:#FFFFE1;border-right:1px solid #C0C0C0;border-bottom:1px solid #C0C0C0;font-size:12.5px;letter-spacing:-0.2px;">12</div>
<div class="t c " style="left:602px;top:641px;width:29px;height:19px;line-height:19px;background:#FFFFE1;border-right:1px solid #C0C0C0;border-bottom:1px solid #C0C0C0;font-size:12.5px;letter-spacing:-0.2px;">.</div>
<div class="t c " style="left:631px;top:641px;width:29px;height:19px;line-height:19px;background:#FFFFE1;border-right:1px solid #C0C0C0;border-bottom:1px solid #C0C0C0;font-size:12.5px;letter-spacing:-0.2px;">.</div>
<div class="t c o" style="left:660px;top:641px;width:29px;height:19px;line-height:19px;background:#FFFFE1;border-right:1px solid #C0C0C0;border-bottom:1px solid #C0C0C0;font-size:12.5px;letter-spacing:-0.2px;">*3)</div>
<div class="t c " style="left:689px;top:641px;width:29px;height:19px;line-height:19px;background:#FFFFE1;border-right:1px solid #C0C0C0;border-bottom:1px solid #C0C0C0;font-size:12.5px;letter-spacing:-0.2px;">.</div>
<div class="t c " style="left:718px;top:641px;width:29px;height:19px;line-height:19px;background:#FFFFE1;border-right:1px solid #C0C0C0;border-bottom:1px solid #C0C0C0;font-size:12.5px;letter-spacing:-0.2px;">.</div>
<div class="t c " style="left:747px;top:641px;width:29px;height:19px;line-height:19px;background:#FFFFE1;border-right:1px solid #C0C0C0;border-bottom:1px solid #C0C0C0;font-size:12.5px;letter-spacing:-0.2px;">.</div>
<div class="t c " style="left:776px;top:641px;width:29px;height:19px;line-height:19px;background:#FFFFE1;border-right:1px solid #C0C0C0;border-bottom:1px solid #C0C0C0;font-size:12.5px;letter-spacing:-0.2px;">.</div>
<div class="t c " style="left:805px;top:641px;width:29px;height:19px;line-height:19px;background:#FFFFE1;border-right:1px solid #C0C0C0;border-bottom:1px solid #C0C0C0;font-size:12.5px;letter-spacing:-0.2px;">.</div>
<div class="t c " style="left:834px;top:641px;width:29px;height:19px;line-height:19px;background:#FFFFE1;border-right:1px solid #C0C0C0;border-bottom:1px solid #C0C0C0;font-size:12.5px;letter-spacing:-0.2px;">.</div>
<div class="t c " style="left:863px;top:641px;width:29px;height:19px;line-height:19px;background:#FFFFE1;border-right:1px solid #C0C0C0;border-bottom:1px solid #C0C0C0;font-size:12.5px;letter-spacing:-0.2px;">.</div>
<div class="t c " style="left:892px;top:641px;width:29px;height:19px;line-height:19px;background:#FFFFE1;border-right:1px solid #C0C0C0;border-bottom:1px solid #C0C0C0;font-size:12.5px;letter-spacing:-0.2px;">.</div>
<div class="t c " style="left:921px;top:641px;width:29px;height:19px;line-height:19px;background:#fff;border-right:1px solid #C0C0C0;border-bottom:1px solid #C0C0C0;font-size:12.5px;letter-spacing:-0.2px;">.</div>
<div class="t c" style="left:19px;top:660px;width:61px;height:19px;line-height:19px;background:#F0F0F0;font-size:11px;letter-spacing:0;">12.2</div>
<div class="t c bi" style="left:80px;top:660px;width:29px;height:19px;line-height:19px;background:#8FC2C4;border-right:1px solid #9CCACA;border-bottom:1px solid #C0C0C0;font-size:12.5px;letter-spacing:-0.2px;">12</div>
<div class="t c bi" style="left:109px;top:660px;width:29px;height:19px;line-height:19px;background:#8FC2C4;border-right:1px solid #9CCACA;border-bottom:1px solid #C0C0C0;font-size:12.5px;letter-spacing:-0.2px;">07</div>
<div class="t c " style="left:138px;top:660px;width:29px;height:19px;line-height:19px;background:#8FC2C4;border-right:1px solid #9CCACA;border-bottom:1px solid #C0C0C0;font-size:12.5px;letter-spacing:-0.2px;">.</div>
<div class="t c " style="left:167px;top:660px;width:29px;height:19px;line-height:19px;background:#8FC2C4;border-right:1px solid #9CCACA;border-bottom:1px solid #C0C0C0;font-size:12.5px;letter-spacing:-0.2px;">.</div>
<div class="t c " style="left:196px;top:660px;width:29px;height:19px;line-height:19px;background:#8FC2C4;border-right:1px solid #9CCACA;border-bottom:1px solid #C0C0C0;font-size:12.5px;letter-spacing:-0.2px;">.</div>
<div class="t c " style="left:225px;top:660px;width:29px;height:19px;line-height:19px;background:#8FC2C4;border-right:1px solid #9CCACA;border-bottom:1px solid #C0C0C0;font-size:12.5px;letter-spacing:-0.2px;">.</div>
<div class="t c " style="left:254px;top:660px;width:29px;height:19px;line-height:19px;background:#8FC2C4;border-right:1px solid #9CCACA;border-bottom:1px solid #C0C0C0;font-size:12.5px;letter-spacing:-0.2px;">.</div>
<div class="t c o" style="left:283px;top:660px;width:29px;height:19px;line-height:19px;background:#8FC2C4;border-right:1px solid #9CCACA;border-bottom:1px solid #C0C0C0;font-size:12.5px;letter-spacing:-0.2px;">*2</div>
<div class="t c bi" style="left:312px;top:660px;width:29px;height:19px;line-height:19px;background:#8FC2C4;border-right:1px solid #9CCACA;border-bottom:1px solid #C0C0C0;font-size:12.5px;letter-spacing:-0.2px;">13</div>
<div class="t c b" style="left:341px;top:660px;width:29px;height:19px;line-height:19px;background:#8FC2C4;border-right:1px solid #9CCACA;border-bottom:1px solid #C0C0C0;font-size:12.5px;letter-spacing:-0.2px;">11</div>
<div class="t c " style="left:370px;top:660px;width:29px;height:19px;line-height:19px;background:#8FC2C4;border-right:1px solid #9CCACA;border-bottom:1px solid #C0C0C0;font-size:12.5px;letter-spacing:-0.2px;">.</div>
<div class="t c " style="left:399px;top:660px;width:29px;height:19px;line-height:19px;background:#8FC2C4;border-right:1px solid #9CCACA;border-bottom:1px solid #C0C0C0;font-size:12.5px;letter-spacing:-0.2px;">.</div>
<div class="t c o" style="left:428px;top:660px;width:29px;height:19px;line-height:19px;background:#8FC2C4;border-right:1px solid #9CCACA;border-bottom:1px solid #C0C0C0;font-size:12.5px;letter-spacing:-0.2px;">*4</div>
<div class="t c " style="left:457px;top:660px;width:29px;height:19px;line-height:19px;background:#8FC2C4;border-right:1px solid #9CCACA;border-bottom:1px solid #C0C0C0;font-size:12.5px;letter-spacing:-0.2px;">.</div>
<div class="t c b" style="left:486px;top:660px;width:29px;height:19px;line-height:19px;background:#8FC2C4;border-right:1px solid #9CCACA;border-bottom:1px solid #C0C0C0;font-size:12.5px;letter-spacing:-0.2px;">10</div>
<div class="t c o" style="left:515px;top:660px;width:29px;height:19px;line-height:19px;background:#8FC2C4;border-right:1px solid #9CCACA;border-bottom:1px solid #C0C0C0;font-size:12.5px;letter-spacing:-0.2px;">*4</div>
<div class="t c " style="left:544px;top:660px;width:29px;height:19px;line-height:19px;background:#8FC2C4;border-right:1px solid #9CCACA;border-bottom:1px solid #C0C0C0;font-size:12.5px;letter-spacing:-0.2px;">.</div>
<div class="t c bi" style="left:573px;top:660px;width:29px;height:19px;line-height:19px;background:#8FC2C4;border-right:1px solid #9CCACA;border-bottom:1px solid #C0C0C0;font-size:12.5px;letter-spacing:-0.2px;">14</div>
<div class="t c " style="left:602px;top:660px;width:29px;height:19px;line-height:19px;background:#8FC2C4;border-right:1px solid #9CCACA;border-bottom:1px solid #C0C0C0;font-size:12.5px;letter-spacing:-0.2px;">.</div>
<div class="t c " style="left:631px;top:660px;width:29px;height:19px;line-height:19px;background:#8FC2C4;border-right:1px solid #9CCACA;border-bottom:1px solid #C0C0C0;font-size:12.5px;letter-spacing:-0.2px;">.</div>
<div class="t c o" style="left:660px;top:660px;width:29px;height:19px;line-height:19px;background:#8FC2C4;border-right:1px solid #9CCACA;border-bottom:1px solid #C0C0C0;font-size:12.5px;letter-spacing:-0.2px;">*4)</div>
<div class="t c " style="left:689px;top:660px;width:29px;height:19px;line-height:19px;background:#8FC2C4;border-right:1px solid #9CCACA;border-bottom:1px solid #C0C0C0;font-size:12.5px;letter-spacing:-0.2px;">.</div>
<div class="t c " style="left:718px;top:660px;width:29px;height:19px;line-height:19px;background:#8FC2C4;border-right:1px solid #9CCACA;border-bottom:1px solid #C0C0C0;font-size:12.5px;letter-spacing:-0.2px;">.</div>
<div class="t c " style="left:747px;top:660px;width:29px;height:19px;line-height:19px;background:#8FC2C4;border-right:1px solid #9CCACA;border-bottom:1px solid #C0C0C0;font-size:12.5px;letter-spacing:-0.2px;">.</div>
<div class="t c " style="left:776px;top:660px;width:29px;height:19px;line-height:19px;background:#8FC2C4;border-right:1px solid #9CCACA;border-bottom:1px solid #C0C0C0;font-size:12.5px;letter-spacing:-0.2px;">.</div>
<div class="t c " style="left:805px;top:660px;width:29px;height:19px;line-height:19px;background:#8FC2C4;border-right:1px solid #9CCACA;border-bottom:1px solid #C0C0C0;font-size:12.5px;letter-spacing:-0.2px;">.</div>
<div class="t c " style="left:834px;top:660px;width:29px;height:19px;line-height:19px;background:#8FC2C4;border-right:1px solid #9CCACA;border-bottom:1px solid #C0C0C0;font-size:12.5px;letter-spacing:-0.2px;">.</div>
<div class="t c " style="left:863px;top:660px;width:29px;height:19px;line-height:19px;background:#8FC2C4;border-right:1px solid #9CCACA;border-bottom:1px solid #C0C0C0;font-size:12.5px;letter-spacing:-0.2px;">.</div>
<div class="t c " style="left:892px;top:660px;width:29px;height:19px;line-height:19px;background:#8FC2C4;border-right:1px solid #9CCACA;border-bottom:1px solid #C0C0C0;font-size:12.5px;letter-spacing:-0.2px;">.</div>
<div class="t c " style="left:921px;top:660px;width:29px;height:19px;line-height:19px;background:#8FC2C4;border-right:1px solid #9CCACA;border-bottom:1px solid #C0C0C0;font-size:12.5px;letter-spacing:-0.2px;">.</div>
<div class="t c" style="left:19px;top:679px;width:61px;height:19px;line-height:19px;background:#F0F0F0;font-size:11px;letter-spacing:0;">ang. P.</div>
<div class="t c " style="left:80px;top:679px;width:29px;height:19px;line-height:19px;background:#FFFF55;border-right:1px solid #C0C0C0;border-bottom:1px solid #C0C0C0;font-size:12.5px;letter-spacing:-0.2px;">36</div>
<div class="t c " style="left:109px;top:679px;width:29px;height:19px;line-height:19px;background:#FFFF55;border-right:1px solid #C0C0C0;border-bottom:1px solid #C0C0C0;font-size:12.5px;letter-spacing:-0.2px;">29</div>
<div class="t c " style="left:138px;top:679px;width:29px;height:19px;line-height:19px;background:#FFFF55;border-right:1px solid #C0C0C0;border-bottom:1px solid #C0C0C0;font-size:12.5px;letter-spacing:-0.2px;">.</div>
<div class="t c " style="left:167px;top:679px;width:29px;height:19px;line-height:19px;background:#FFFF55;border-right:1px solid #C0C0C0;border-bottom:1px solid #C0C0C0;font-size:12.5px;letter-spacing:-0.2px;">.</div>
<div class="t c " style="left:196px;top:679px;width:29px;height:19px;line-height:19px;background:#FFFF55;border-right:1px solid #C0C0C0;border-bottom:1px solid #C0C0C0;font-size:12.5px;letter-spacing:-0.2px;">.</div>
<div class="t c " style="left:225px;top:679px;width:29px;height:19px;line-height:19px;background:#FFFF55;border-right:1px solid #C0C0C0;border-bottom:1px solid #C0C0C0;font-size:12.5px;letter-spacing:-0.2px;">.</div>
<div class="t c " style="left:254px;top:679px;width:29px;height:19px;line-height:19px;background:#FFFF55;border-right:1px solid #C0C0C0;border-bottom:1px solid #C0C0C0;font-size:12.5px;letter-spacing:-0.2px;">.</div>
<div class="t c " style="left:283px;top:679px;width:29px;height:19px;line-height:19px;background:#FFFF55;border-right:1px solid #C0C0C0;border-bottom:1px solid #C0C0C0;font-size:12.5px;letter-spacing:-0.2px;">26</div>
<div class="t c " style="left:312px;top:679px;width:29px;height:19px;line-height:19px;background:#EE8888;border-right:1px solid #C0C0C0;border-bottom:1px solid #C0C0C0;font-size:12.5px;letter-spacing:-0.2px;">43</div>
<div class="t c " style="left:341px;top:679px;width:29px;height:19px;line-height:19px;background:#EE8888;border-right:1px solid #C0C0C0;border-bottom:1px solid #C0C0C0;font-size:12.5px;letter-spacing:-0.2px;">31</div>
<div class="t c " style="left:370px;top:679px;width:29px;height:19px;line-height:19px;background:#EE8888;border-right:1px solid #C0C0C0;border-bottom:1px solid #C0C0C0;font-size:12.5px;letter-spacing:-0.2px;">20</div>
<div class="t c " style="left:399px;top:679px;width:29px;height:19px;line-height:19px;background:#EE8888;border-right:1px solid #C0C0C0;border-bottom:1px solid #C0C0C0;font-size:12.5px;letter-spacing:-0.2px;">.</div>
<div class="t c " style="left:428px;top:679px;width:29px;height:19px;line-height:19px;background:#EE8888;border-right:1px solid #C0C0C0;border-bottom:1px solid #C0C0C0;font-size:12.5px;letter-spacing:-0.2px;">22</div>
<div class="t c " style="left:457px;top:679px;width:29px;height:19px;line-height:19px;background:#EE8888;border-right:1px solid #C0C0C0;border-bottom:1px solid #C0C0C0;font-size:12.5px;letter-spacing:-0.2px;">.</div>
<div class="t c " style="left:486px;top:679px;width:29px;height:19px;line-height:19px;background:#A9EEC9;border-right:1px solid #C0C0C0;border-bottom:1px solid #C0C0C0;font-size:12.5px;letter-spacing:-0.2px;">31</div>
<div class="t c " style="left:515px;top:679px;width:29px;height:19px;line-height:19px;background:#A9EEC9;border-right:1px solid #C0C0C0;border-bottom:1px solid #C0C0C0;font-size:12.5px;letter-spacing:-0.2px;">19</div>
<div class="t c " style="left:544px;top:679px;width:29px;height:19px;line-height:19px;background:#A9EEC9;border-right:1px solid #C0C0C0;border-bottom:1px solid #C0C0C0;font-size:12.5px;letter-spacing:-0.2px;">.</div>
<div class="t c " style="left:573px;top:679px;width:29px;height:19px;line-height:19px;background:#A9EEC9;border-right:1px solid #C0C0C0;border-bottom:1px solid #C0C0C0;font-size:12.5px;letter-spacing:-0.2px;">41</div>
<div class="t c " style="left:602px;top:679px;width:29px;height:19px;line-height:19px;background:#A9EEC9;border-right:1px solid #C0C0C0;border-bottom:1px solid #C0C0C0;font-size:12.5px;letter-spacing:-0.2px;">.</div>
<div class="t c " style="left:631px;top:679px;width:29px;height:19px;line-height:19px;background:#A9EEC9;border-right:1px solid #C0C0C0;border-bottom:1px solid #C0C0C0;font-size:12.5px;letter-spacing:-0.2px;">.</div>
<div class="t c " style="left:660px;top:679px;width:29px;height:19px;line-height:19px;background:#70B4B8;border-right:1px solid #C0C0C0;border-bottom:1px solid #C0C0C0;font-size:12.5px;letter-spacing:-0.2px;">00</div>
<div class="t c " style="left:689px;top:679px;width:29px;height:19px;line-height:19px;background:#FFFF55;border-right:1px solid #C0C0C0;border-bottom:1px solid #C0C0C0;font-size:12.5px;letter-spacing:-0.2px;">.</div>
<div class="t c " style="left:718px;top:679px;width:29px;height:19px;line-height:19px;background:#FFFF55;border-right:1px solid #C0C0C0;border-bottom:1px solid #C0C0C0;font-size:12.5px;letter-spacing:-0.2px;">.</div>
<div class="t c " style="left:747px;top:679px;width:29px;height:19px;line-height:19px;background:#EE8888;border-right:1px solid #C0C0C0;border-bottom:1px solid #C0C0C0;font-size:12.5px;letter-spacing:-0.2px;">.</div>
<div class="t c " style="left:776px;top:679px;width:29px;height:19px;line-height:19px;background:#A9EEC9;border-right:1px solid #C0C0C0;border-bottom:1px solid #C0C0C0;font-size:12.5px;letter-spacing:-0.2px;">.</div>
<div class="t c " style="left:805px;top:679px;width:29px;height:19px;line-height:19px;background:#A9EEC9;border-right:1px solid #C0C0C0;border-bottom:1px solid #C0C0C0;font-size:12.5px;letter-spacing:-0.2px;">.</div>
<div class="t c " style="left:834px;top:679px;width:29px;height:19px;line-height:19px;background:#A9EEC9;border-right:1px solid #C0C0C0;border-bottom:1px solid #C0C0C0;font-size:12.5px;letter-spacing:-0.2px;">.</div>
<div class="t c " style="left:863px;top:679px;width:29px;height:19px;line-height:19px;background:#A9EEC9;border-right:1px solid #C0C0C0;border-bottom:1px solid #C0C0C0;font-size:12.5px;letter-spacing:-0.2px;">.</div>
<div class="t c " style="left:892px;top:679px;width:29px;height:19px;line-height:19px;background:#A9EEC9;border-right:1px solid #C0C0C0;border-bottom:1px solid #C0C0C0;font-size:12.5px;letter-spacing:-0.2px;">.</div>
<div class="t c " style="left:921px;top:679px;width:29px;height:19px;line-height:19px;background:#3DD2EA;border-right:1px solid #C0C0C0;border-bottom:1px solid #C0C0C0;font-size:12.5px;letter-spacing:-0.2px;">24</div>
<div class="a" style="left:14px;top:698px;width:936px;height:1px;background:#fff"></div>
<div class="t c" style="left:19px;top:699px;width:61px;height:19px;line-height:19px;background:#F0F0F0;font-size:13px;">Kl. 10</div>
<div class="t c" style="left:80px;top:699px;width:29px;height:19px;line-height:19px;background:#FF8080;border-right:1px solid #C0C0C0;">.</div>
<div class="t c" style="left:109px;top:699px;width:29px;height:19px;line-height:19px;background:#FF8080;border-right:1px solid #C0C0C0;">.</div>
<div class="t c" style="left:138px;top:699px;width:29px;height:19px;line-height:19px;background:#FF8080;border-right:1px solid #C0C0C0;">2</div>
<div class="t c" style="left:167px;top:699px;width:29px;height:19px;line-height:19px;background:#FF8080;border-right:1px solid #C0C0C0;">.</div>
<div class="t c" style="left:196px;top:699px;width:29px;height:19px;line-height:19px;background:#FF8080;border-right:1px solid #C0C0C0;">.</div>
<div class="t c" style="left:225px;top:699px;width:29px;height:19px;line-height:19px;background:#FF8080;border-right:1px solid #C0C0C0;">.</div>
<div class="t c" style="left:254px;top:699px;width:29px;height:19px;line-height:19px;background:#FF8080;border-right:1px solid #C0C0C0;">.</div>
<div class="t c" style="left:283px;top:699px;width:29px;height:19px;line-height:19px;background:#FF8080;border-right:1px solid #C0C0C0;">3</div>
<div class="t c" style="left:312px;top:699px;width:29px;height:19px;line-height:19px;background:#FF8080;border-right:1px solid #C0C0C0;">.</div>
<div class="t c" style="left:341px;top:699px;width:29px;height:19px;line-height:19px;background:#FF8080;border-right:1px solid #C0C0C0;">.</div>
<div class="t c" style="left:370px;top:699px;width:29px;height:19px;line-height:19px;background:#FF8080;border-right:1px solid #C0C0C0;">.</div>
<div class="t c" style="left:399px;top:699px;width:29px;height:19px;line-height:19px;background:#FF8080;border-right:1px solid #C0C0C0;">.</div>
<div class="t c" style="left:428px;top:699px;width:29px;height:19px;line-height:19px;background:#FF8080;border-right:1px solid #C0C0C0;">.</div>
<div class="t c" style="left:457px;top:699px;width:29px;height:19px;line-height:19px;background:#FF8080;border-right:1px solid #C0C0C0;">.</div>
<div class="t c" style="left:486px;top:699px;width:29px;height:19px;line-height:19px;background:#FF8080;border-right:1px solid #C0C0C0;">.</div>
<div class="t c" style="left:515px;top:699px;width:29px;height:19px;line-height:19px;background:#FF8080;border-right:1px solid #C0C0C0;">.</div>
<div class="t c" style="left:544px;top:699px;width:29px;height:19px;line-height:19px;background:#FF8080;border-right:1px solid #C0C0C0;">4</div>
<div class="t c" style="left:573px;top:699px;width:29px;height:19px;line-height:19px;background:#FF8080;border-right:1px solid #C0C0C0;">.</div>
<div class="t c" style="left:602px;top:699px;width:29px;height:19px;line-height:19px;background:#FF8080;border-right:1px solid #C0C0C0;">.</div>
<div class="t c" style="left:631px;top:699px;width:29px;height:19px;line-height:19px;background:#FF8080;border-right:1px solid #C0C0C0;">.</div>
<div class="t c" style="left:660px;top:699px;width:29px;height:19px;line-height:19px;background:#FF8080;border-right:1px solid #C0C0C0;">.</div>
<div class="t c" style="left:689px;top:699px;width:29px;height:19px;line-height:19px;background:#FF8080;border-right:1px solid #C0C0C0;">.</div>
<div class="t c" style="left:718px;top:699px;width:29px;height:19px;line-height:19px;background:#FF8080;border-right:1px solid #C0C0C0;">.</div>
<div class="t c" style="left:747px;top:699px;width:29px;height:19px;line-height:19px;background:#FF8080;border-right:1px solid #C0C0C0;">.</div>
<div class="t c" style="left:776px;top:699px;width:29px;height:19px;line-height:19px;background:#FF8080;border-right:1px solid #C0C0C0;">.</div>
<div class="t c" style="left:805px;top:699px;width:29px;height:19px;line-height:19px;background:#FF8080;border-right:1px solid #C0C0C0;">.</div>
<div class="t c" style="left:834px;top:699px;width:29px;height:19px;line-height:19px;background:#FF8080;border-right:1px solid #C0C0C0;">.</div>
<div class="t c" style="left:863px;top:699px;width:29px;height:19px;line-height:19px;background:#FF8080;border-right:1px solid #C0C0C0;">.</div>
<div class="t c" style="left:892px;top:699px;width:29px;height:19px;line-height:19px;background:#FF8080;border-right:1px solid #C0C0C0;">.</div>
<div class="t c" style="left:921px;top:699px;width:29px;height:19px;line-height:19px;background:#FF8080;border-right:1px solid #C0C0C0;">.</div>
<div class="t c" style="left:950px;top:699px;width:29px;height:19px;line-height:19px;background:#FF8080;border-right:1px solid #C0C0C0;">.</div>
<div class="t c" style="left:979px;top:699px;width:29px;height:19px;line-height:19px;background:#FF8080;border-right:1px solid #C0C0C0;">.</div>
<div class="rbox" style="left:918px;top:525px;width:33px;height:175px"></div>
</body></html>
